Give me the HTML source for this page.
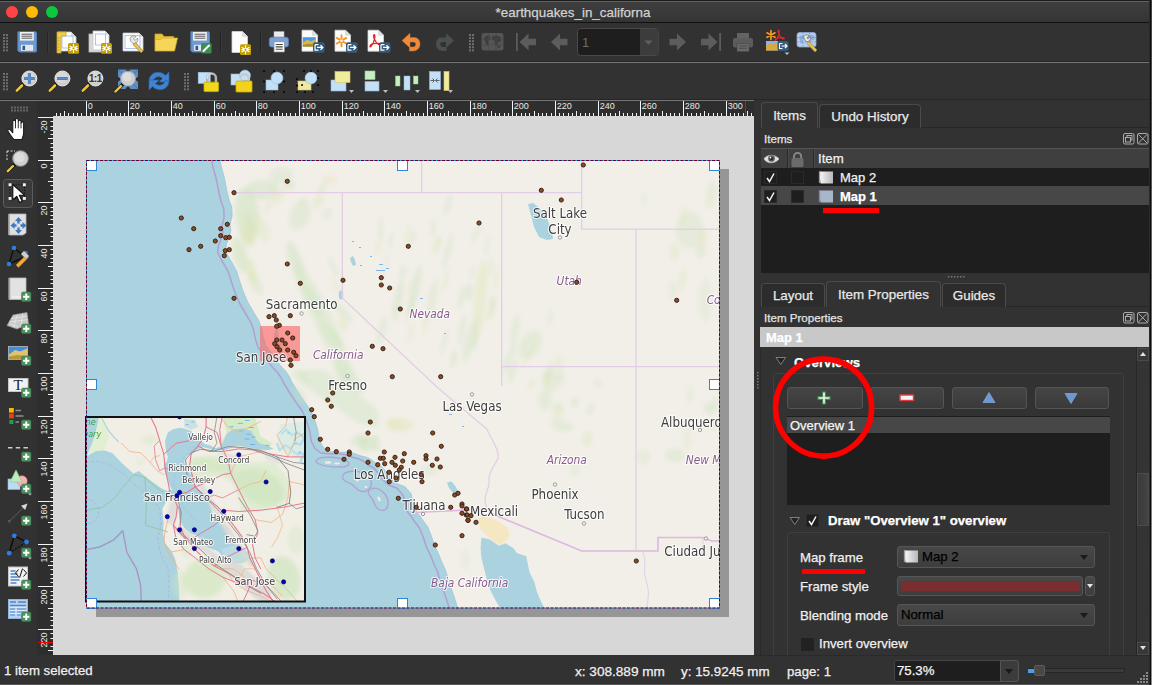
<!DOCTYPE html><html><head><meta charset="utf-8"><title>earthquakes_in_californa</title><style>
*{box-sizing:border-box}
html,body{margin:0;padding:0}
body{width:1152px;height:685px;position:relative;overflow:hidden;background:#323232;font-family:"Liberation Sans",sans-serif;font-size:13.2px;color:#e6e6e6}
.abs{position:absolute}
#title{left:0;top:0;width:1152px;height:23px;background:linear-gradient(#1c1c1c 0,#1c1c1c 1px,#626262 1px,#626262 2px,#3e3e3e 2px,#353535 22px,#111 22px);}
#title .t{left:0;width:1146px;top:5px;text-align:center;color:#d2d2d2;font-size:13.4px}
.light{width:12px;height:12px;border-radius:6px;top:6px}
body{-webkit-text-stroke-width:0.25px}
svg text{-webkit-text-stroke-width:0}
.hline{left:0;width:1150px;height:1px;background:#686868}
.grip{width:5px}
.tab{border:1px solid #4a4a4a;border-bottom:none;border-radius:4px 4px 0 0;background:#2c2c2c;color:#e8e8e8;font-size:13.4px;text-align:center}
.tab.sel{background:#323232;}
.docktitle{font-size:11.6px;color:#e4e4e4}
.btn{border:1px solid #555;border-radius:3px;background:linear-gradient(#454545,#3a3a3a)}
.combo{border:1px solid #565656;border-radius:3px;background:linear-gradient(#484848,#3d3d3d);color:#000;font-size:13.2px}
.lbl{font-size:13.2px;color:#f0f0f0;white-space:nowrap}
.bold{font-weight:bold;color:#fff}
.gbox{border:1px solid #3f3f3f;border-radius:3px}
.chk{width:13px;height:13px;background:#1e1e1e;border:1px solid #2a2a2a}
</style></head><body>
<div id="title" class="abs"><div class="abs light" style="left:6px;background:#fe4447"></div><div class="abs light" style="left:26px;background:#fdbb05"></div><div class="abs light" style="left:46px;background:#0bc840"></div><div class="abs t">*earthquakes_in_californa</div></div>
<div class="abs hline" style="top:61px;background:#242424"></div><div class="abs hline" style="top:62px;background:#767676"></div>
<div class="abs hline" style="top:99px;background:#262626"></div><div class="abs hline" style="top:100px;background:#767676"></div>
<svg class="abs" style="left:0;top:23px" width="1152" height="77" viewBox="0 23 1152 77" font-family="Liberation Sans, sans-serif"><rect x="3" y="34.00" width="2" height="2" fill="#6e6e6e"/><rect x="6" y="34.00" width="2" height="2" fill="#6e6e6e"/><rect x="3" y="37.07" width="2" height="2" fill="#6e6e6e"/><rect x="6" y="37.07" width="2" height="2" fill="#6e6e6e"/><rect x="3" y="40.14" width="2" height="2" fill="#6e6e6e"/><rect x="6" y="40.14" width="2" height="2" fill="#6e6e6e"/><rect x="3" y="43.21" width="2" height="2" fill="#6e6e6e"/><rect x="6" y="43.21" width="2" height="2" fill="#6e6e6e"/><rect x="3" y="46.28" width="2" height="2" fill="#6e6e6e"/><rect x="6" y="46.28" width="2" height="2" fill="#6e6e6e"/><rect x="3" y="49.35" width="2" height="2" fill="#6e6e6e"/><rect x="6" y="49.35" width="2" height="2" fill="#6e6e6e"/><g transform="translate(15,30)" ><path d="M2.900 1.800h17.600a1 1 0 0 1 1 1v18.200a1 1 0 0 1-1 1H4.400L2.900 20.500z" fill="#6c99d0" stroke="#547fb8" stroke-width="1"/>
<rect x="5" y="2" width="13.800" height="8.600" fill="#f1f1f1"/><path d="M6.500 4.200h10.800M6.500 6.200h10.800M6.500 8.200h10.800" stroke="#4a4a4a" stroke-width="0.900"/>
<rect x="6" y="14.800" width="12.200" height="6" fill="#e6e6e6"/><rect x="7.500" y="15.800" width="2.600" height="4.200" fill="#2f568c"/></g><path d="M47.5 31V53" stroke="#252525" stroke-width="1"/><path d="M48.5 31V53" stroke="#3a3a3a" stroke-width="1"/><g transform="translate(55,30)" ><path d="M3 2h13l5 5v14H3z" fill="#fdfdfd" stroke="#c8c8c8" stroke-width="0.8"/><path d="M16 2v5h5z" fill="#e0e0e0"/><rect x="7" y="6" width="11" height="12" fill="none" stroke="#9db4ee" stroke-width="0.8"/>
<path d="M2 2h9v4H6v17H2z" fill="#f0d04a" stroke="#c9a227" stroke-width="0.8"/><path d="M2.5 8h2M2.5 11h2M2.5 14h2M2.5 17h2M2.5 20h2" stroke="#a88418" stroke-width="0.7"/><rect x="13" y="13" width="11" height="10.700" rx="1.500" fill="#c4a000"/><g stroke="#fff" stroke-width="1.200" stroke-linecap="round"><path d="M18.500 14.300v8.100M15 16.300l7 4.100M15 20.400l7-4.100M14.700 18.350h7.600"/></g><circle cx="18.500" cy="18.350" r="1.500" fill="#c4a000" stroke="#fff" stroke-width="0.900"/></g><g transform="translate(88,30)" ><rect x="1" y="4" width="15" height="18" fill="#d9d9d9" stroke="#bdbdbd" stroke-width="0.8"/><path d="M5 1h12l4 4v15H5z" fill="#fdfdfd" stroke="#c8c8c8" stroke-width="0.8"/><path d="M17 1v4h4z" fill="#e0e0e0"/><rect x="7.5" y="4" width="10" height="11" fill="none" stroke="#9db4ee" stroke-width="0.8"/><rect x="13" y="13" width="11" height="10.700" rx="1.500" fill="#c4a000"/><g stroke="#fff" stroke-width="1.200" stroke-linecap="round"><path d="M18.500 14.300v8.100M15 16.300l7 4.100M15 20.400l7-4.100M14.700 18.350h7.600"/></g><circle cx="18.500" cy="18.350" r="1.500" fill="#c4a000" stroke="#fff" stroke-width="0.900"/></g><g transform="translate(121,30)" ><path d="M2 3h16l4 4v14H2z" fill="#fdfdfd" stroke="#c8c8c8" stroke-width="0.8"/><path d="M18 3v4h4z" fill="#e0e0e0"/><rect x="4" y="5.5" width="15" height="13" fill="none" stroke="#9db4ee" stroke-width="0.8"/>
<path d="M9 8.5a4 4 0 0 1 6-2l-2.5 2.5 1.5 1.5 2.5-2.5a4 4 0 0 1-4.5 5.5l-0.5-0.5-2-2z" fill="#e8e8e8" stroke="#8a8a8a" stroke-width="0.8"/><path d="M14.5 12.5l7.5 8.5-1.8 1.8-8-8z" fill="#e6c35c" stroke="#a78422" stroke-width="0.8"/></g><g transform="translate(154,30)" ><path d="M1 4h7l2 2.5h9.5v4H1z" fill="#e9c53c" stroke="#c9a227" stroke-width="0.8"/><path d="M1 21V9.5h6l1.5-1.5H23.5L20.5 21z" fill="#f6d658" stroke="#d4ad2d" stroke-width="0.8"/></g><g transform="translate(188,30)" ><path d="M2.900 1.800h17.600a1 1 0 0 1 1 1v18.200a1 1 0 0 1-1 1H4.400L2.900 20.500z" fill="#6c99d0" stroke="#547fb8" stroke-width="1"/>
<rect x="5" y="2" width="13.800" height="8.600" fill="#f1f1f1"/><path d="M6.500 4.200h10.800M6.500 6.200h10.800M6.500 8.200h10.800" stroke="#4a4a4a" stroke-width="0.900"/>
<rect x="6" y="14.800" width="12.200" height="6" fill="#e6e6e6"/><rect x="7.500" y="15.800" width="2.600" height="4.200" fill="#2f568c"/><rect x="13" y="13" width="10.5" height="10.5" rx="1.5" fill="#3c8d4f"/><path d="M15.5 21l5.5-5.5" stroke="#fff" stroke-width="2" stroke-linecap="round"/></g><path d="M220.5 31V53" stroke="#252525" stroke-width="1"/><path d="M221.5 31V53" stroke="#3a3a3a" stroke-width="1"/><g transform="translate(230,31)" ><path d="M2 0.500h10.500l5 5v16H2z" fill="#fdfdfd" stroke="#d4d4d4" stroke-width="0.800"/><path d="M12.500 0.500v5h5z" fill="#e0e0e0" stroke="#cfcfcf" stroke-width="0.600"/><g transform="translate(-3,0.300)"><rect x="13" y="13" width="11" height="10.700" rx="1.500" fill="#c4a000"/><g stroke="#fff" stroke-width="1.200" stroke-linecap="round"><path d="M18.500 14.300v8.100M15 16.300l7 4.100M15 20.400l7-4.100M14.700 18.350h7.600"/></g><circle cx="18.500" cy="18.350" r="1.500" fill="#c4a000" stroke="#fff" stroke-width="0.900"/></g></g><path d="M260.5 31V53" stroke="#252525" stroke-width="1"/><path d="M261.5 31V53" stroke="#3a3a3a" stroke-width="1"/><g transform="translate(267,30)" ><rect x="7" y="1.700" width="10" height="6.500" fill="#ececec" stroke="#bdbdbd" stroke-width="0.600"/><rect x="2.300" y="7.200" width="19.200" height="9.800" rx="2.500" fill="#7ea2d3" stroke="#5b83ba" stroke-width="0.800"/><rect x="7" y="11.800" width="10.500" height="10.200" fill="#fbfbfb" stroke="#8a8a8a" stroke-width="0.700"/><path d="M8.700 14.500h7M8.700 16.900h7M8.700 19.300h7" stroke="#444" stroke-width="1.100"/></g><g transform="translate(300,29.7)" ><path d="M2 0.500h10.500l5 5v16H2z" fill="#fdfdfd" stroke="#d4d4d4" stroke-width="0.800"/><path d="M12.500 0.500v5h5z" fill="#e0e0e0" stroke="#cfcfcf" stroke-width="0.600"/><rect x="2.800" y="7.500" width="13" height="9.300" fill="#4a9be8"/><path d="M2.800 13l4.500-3 3.500 1.500 5-2v7.300H2.800z" fill="#d8b44a"/><path d="M2.800 15.200l5-1 8 0.800v1.800H2.800z" fill="#a88a2a"/><rect x="13" y="12.500" width="11.5" height="10.5" rx="2" fill="#37597a"/><path d="M15 15v5.500h3.500M15 15h3.500" fill="none" stroke="#fff" stroke-width="1.2"/><path d="M17 17.750h5.500M20.500 15.500l2.300 2.250-2.300 2.250" fill="none" stroke="#fff" stroke-width="1.3"/></g><g transform="translate(333,29.7)" ><path d="M2 0.500h10.500l5 5v16H2z" fill="#fdfdfd" stroke="#d4d4d4" stroke-width="0.800"/><path d="M12.500 0.500v5h5z" fill="#e0e0e0" stroke="#cfcfcf" stroke-width="0.600"/><g stroke="#f7941d" stroke-width="1.900" stroke-linecap="round"><path d="M8.500 5.500v11M3.800 8.200l9.400 5.600M3.800 13.800l9.400-5.600"/></g><circle cx="8.500" cy="11" r="1.300" fill="#fdfdfd"/><rect x="13" y="12.500" width="11.5" height="10.5" rx="2" fill="#37597a"/><path d="M15 15v5.500h3.500M15 15h3.500" fill="none" stroke="#fff" stroke-width="1.2"/><path d="M17 17.750h5.500M20.500 15.500l2.300 2.250-2.300 2.250" fill="none" stroke="#fff" stroke-width="1.3"/></g><g transform="translate(366,29.7)" ><path d="M2 0.500h10.500l5 5v16H2z" fill="#fdfdfd" stroke="#d4d4d4" stroke-width="0.800"/><path d="M12.500 0.500v5h5z" fill="#e0e0e0" stroke="#cfcfcf" stroke-width="0.600"/><path d="M8 5c1.500 0 1 4-0.500 7.500S3.500 18.500 4 16.500 8.500 13.500 12.500 13.800 14.500 16 12 14.500 6.500 6 8 5z" fill="none" stroke="#e3262b" stroke-width="1.300"/><rect x="13" y="12.500" width="11.5" height="10.5" rx="2" fill="#37597a"/><path d="M15 15v5.500h3.500M15 15h3.500" fill="none" stroke="#fff" stroke-width="1.2"/><path d="M17 17.750h5.500M20.500 15.500l2.300 2.250-2.300 2.250" fill="none" stroke="#fff" stroke-width="1.3"/></g><g transform="translate(400,30)" ><path d="M2 10.600L10 3.300V7.500H14C18 7.500 20 10.500 20 14C20 18 17 21 13 21H9.400V17H13C14.800 17 15.800 15.800 15.800 14.200C15.800 12.700 14.800 12 13.500 12H10V17.900Z" fill="#ee8a3c" stroke="#d9742a" stroke-width="0.500"/></g><g transform="translate(432,30)" ><path d="M22 10.600L14 3.300V7.500H10C6 7.500 4 10.500 4 14C4 18 7 21 11 21H14.600V17H11C9.200 17 8.200 15.800 8.200 14.200C8.200 12.700 9.200 12 10.500 12H14V17.900Z" fill="#4a504f"/></g><rect x="469" y="34.00" width="2" height="2" fill="#6e6e6e"/><rect x="472" y="34.00" width="2" height="2" fill="#6e6e6e"/><rect x="469" y="37.07" width="2" height="2" fill="#6e6e6e"/><rect x="472" y="37.07" width="2" height="2" fill="#6e6e6e"/><rect x="469" y="40.14" width="2" height="2" fill="#6e6e6e"/><rect x="472" y="40.14" width="2" height="2" fill="#6e6e6e"/><rect x="469" y="43.21" width="2" height="2" fill="#6e6e6e"/><rect x="472" y="43.21" width="2" height="2" fill="#6e6e6e"/><rect x="469" y="46.28" width="2" height="2" fill="#6e6e6e"/><rect x="472" y="46.28" width="2" height="2" fill="#6e6e6e"/><rect x="469" y="49.35" width="2" height="2" fill="#6e6e6e"/><rect x="472" y="49.35" width="2" height="2" fill="#6e6e6e"/><g transform="translate(480,30)" ><rect x="1.500" y="3" width="22" height="17.500" rx="2.500" fill="#555"/><g fill="#3e3e3e"><path d="M4 8l3-2.500 3 0.500 0.500 3-2 2 0.500 3.500-2 1-1.500-3z"/><path d="M12 6.500l4-1 4.500 1.500 0.500 4-3 1.500-1 3-2.500-1 0.500-3.500-3-1.500z"/><path d="M17 15.500l2.500-0.500 1 2.500-2.500 0.500z"/></g><path d="M1.500 9H23.500M1.500 15H23.500M8.500 3v17.500M16 3v17.500" stroke="#484848" stroke-width="0.6"/></g><g transform="translate(516,30)" ><rect x="0" y="3" width="1.800" height="18" fill="#5c5c5c"/><path d="M3.500 12l9-8.500v5.300H20v6.400h-7.500v5.300z" fill="#5c5c5c"/></g><g transform="translate(549,30)" ><path d="M2 12l9-8.500v5.300h7.500v6.400H11v5.300z" fill="#5c5c5c"/></g><rect x="577.500" y="28.500" width="81" height="27" rx="3" fill="#1e1e1e" stroke="#4a4a4a"/><path d="M640 29h15.500a3 3 0 0 1 3 3v20a3 3 0 0 1-3 3H640z" fill="#3c3c3c"/><path d="M644.500 40.500h8l-4 4.500z" fill="#5e5e5e"/><text x="582" y="47" font-size="13" fill="#6b6b6b">1</text><g transform="translate(666,30)" ><g transform="translate(22,0) scale(-1,1)"><path d="M2 12l9-8.500v5.300h7.500v6.400H11v5.300z" fill="#5c5c5c"/></g></g><g transform="translate(699,30)" ><g transform="translate(22,0) scale(-1,1)"><rect x="0" y="3" width="1.800" height="18" fill="#5c5c5c"/><path d="M3.500 12l9-8.500v5.300H20v6.400h-7.500v5.300z" fill="#5c5c5c"/></g></g><g transform="translate(731,30)" ><rect x="6" y="3" width="12" height="6" fill="#636363"/><rect x="2" y="8" width="20" height="9.500" rx="2" fill="#5c5c5c"/><rect x="6" y="13.500" width="12" height="8" fill="#6a6a6a" stroke="#484848" stroke-width="0.6"/><path d="M8 16h8M8 18.300h8" stroke="#484848" stroke-width="0.9"/></g><g transform="translate(764,29)" ><g stroke="#f39a1f" stroke-width="1.700" stroke-linecap="round"><path d="M7 1.500v9M3 3.800l8 4.500M3 8.300l8-4.500"/></g><path d="M14.500 1c1.200 0 0.800 3.500-0.400 6.500S10.500 12.700 11 11s3.900-2.500 7.300-2.300 1.800 2-0.400 0.700-4.800-7.400-3.400-8.400z" fill="none" stroke="#e3262b" stroke-width="1.200"/>
<rect x="2" y="12" width="12" height="9.500" fill="#8bb3e4"/><path d="M2 17l4-2.500 3.500 1 4.500-2v8H2z" fill="#d9a93a"/>
<rect x="13.500" y="12" width="11" height="10" rx="2" fill="#37597a"/><path d="M15.500 14.500v5h3M15.500 14.500h3" fill="none" stroke="#fff" stroke-width="1.100"/><path d="M17.500 17h5M21 15l2 2-2 2" fill="none" stroke="#fff" stroke-width="1.200"/><path d="M20.500 23.500h5l-2.500 2.500z" fill="#bbb"/></g><g transform="translate(796,31)" ><rect x="1" y="1.500" width="19" height="14.500" rx="2.500" fill="#b9cdea" stroke="#8aa7d4" stroke-width="0.8"/><g fill="#8fb0dc"><path d="M3 6l3-2 2.500 0.500v3l-2 1.500 0.500 3-2 0.500z"/><path d="M11 4.500l4-1 3.500 1.500v3.500l-3 1-1 2.500-2-1 0.500-3z"/></g><path d="M1 6.500h19M1 11h19M7 1.500V16M13.500 1.500V16" stroke="#5f86c2" stroke-width="0.6" stroke-dasharray="1.500 1"/>
<path d="M7.500 6a3.600 3.600 0 0 1 5.500-1.500L10.700 6.800l1.300 1.300 2.300-2.300a3.600 3.600 0 0 1-4.300 4.700z" fill="#efefef" stroke="#777" stroke-width="0.8"/><path d="M13 10.500l8 8.500-2 2-8-8.500z" fill="#e6c35c" stroke="#a78422" stroke-width="0.8"/></g><rect x="3" y="73.00" width="2" height="2" fill="#6e6e6e"/><rect x="6" y="73.00" width="2" height="2" fill="#6e6e6e"/><rect x="3" y="76.07" width="2" height="2" fill="#6e6e6e"/><rect x="6" y="76.07" width="2" height="2" fill="#6e6e6e"/><rect x="3" y="79.14" width="2" height="2" fill="#6e6e6e"/><rect x="6" y="79.14" width="2" height="2" fill="#6e6e6e"/><rect x="3" y="82.21" width="2" height="2" fill="#6e6e6e"/><rect x="6" y="82.21" width="2" height="2" fill="#6e6e6e"/><rect x="3" y="85.28" width="2" height="2" fill="#6e6e6e"/><rect x="6" y="85.28" width="2" height="2" fill="#6e6e6e"/><rect x="3" y="88.35" width="2" height="2" fill="#6e6e6e"/><rect x="6" y="88.35" width="2" height="2" fill="#6e6e6e"/><g transform="translate(15,69)" ><path d="M2 21.500l8-8" stroke="#111" stroke-width="3.400" stroke-linecap="round"/><path d="M1.800 21.700l5.200-5.200" stroke="#f1c832" stroke-width="2.600" stroke-linecap="round"/><circle cx="14.400" cy="9.500" r="7.500" fill="#cdcdcd" stroke="#f0f0f0" stroke-width="0.900"/><circle cx="13.800" cy="8.500" r="5.600" fill="#e4e4e4" opacity="0.550"/><path d="M14.400 4.300v10.400M9.200 9.500h10.400" stroke="#3f6fa8" stroke-width="3"/><path d="M14.400 4.600v9.800M9.500 9.500h9.800" stroke="#5b8fcf" stroke-width="2"/></g><g transform="translate(48,69)" ><path d="M2 21.500l8-8" stroke="#111" stroke-width="3.400" stroke-linecap="round"/><path d="M1.800 21.700l5.200-5.200" stroke="#f1c832" stroke-width="2.600" stroke-linecap="round"/><circle cx="14.400" cy="9.500" r="7.500" fill="#cdcdcd" stroke="#f0f0f0" stroke-width="0.900"/><circle cx="13.800" cy="8.500" r="5.600" fill="#e4e4e4" opacity="0.550"/><path d="M9.200 9.500h10.400" stroke="#3f6fa8" stroke-width="3"/><path d="M9.500 9.500h9.800" stroke="#5b8fcf" stroke-width="2"/></g><g transform="translate(81,69)" ><path d="M2 21.500l8-8" stroke="#111" stroke-width="3.400" stroke-linecap="round"/><path d="M1.800 21.700l5.200-5.200" stroke="#f1c832" stroke-width="2.600" stroke-linecap="round"/><circle cx="14.400" cy="9.500" r="7.500" fill="#cdcdcd" stroke="#f0f0f0" stroke-width="0.900"/><circle cx="13.800" cy="8.500" r="5.600" fill="#e4e4e4" opacity="0.550"/><text x="14.200" y="13.300" font-size="10.500" font-weight="bold" text-anchor="middle" fill="#383838" letter-spacing="-0.700">1:1</text></g><g transform="translate(114,69)" ><rect x="4" y="0.500" width="20" height="19.500" fill="#5b8fcb"/><g fill="#2f2f2f"><path d="M11.500 0.500h5l-2.500 3.500z"/><path d="M11.500 20h5l-2.500-3.500z"/><path d="M4 7.800v5l3.500-2.500z"/><path d="M24 7.800v5l-3.500-2.500z"/></g><g stroke="#3f72ad" stroke-width="0.800"><path d="M4.500 1l6 6M23.500 1l-6 6M23.500 19.500l-6-6"/></g>
<path d="M2 22l7.500-7.500" stroke="#1a1a1a" stroke-width="3.400" stroke-linecap="round"/><path d="M1.500 22.500l5.400-5.400" stroke="#f1c832" stroke-width="2.400" stroke-linecap="round"/><circle cx="14" cy="9.600" r="7.400" fill="#cdcdcd" stroke="#a9a9a9" stroke-width="0.800"/><circle cx="13" cy="8" r="4.500" fill="#e9e9e9" opacity="0.550"/></g><g transform="translate(147,69)" ><path d="M2 11C3 5.500 7.500 2.500 13 3.500c2.500 0.500 4 1.500 5.500 3L22 3v10h-10l3.500-3.500c-2-2-5.500-2.500-8 0C6.500 10.500 6 11.500 5.500 13z" fill="#3f84d1" stroke="#2b63a6" stroke-width="0.7"/><path d="M22 13c-1 5.500-5.500 8.500-11 7.500-2.500-0.500-4-1.500-5.500-3L2 21V11h10l-3.500 3.500c2 2 5.500 2.500 8 0 1-1 1.500-2 2-3.500z" fill="#3f84d1" stroke="#2b63a6" stroke-width="0.7"/></g><rect x="184" y="73.00" width="2" height="2" fill="#6e6e6e"/><rect x="187" y="73.00" width="2" height="2" fill="#6e6e6e"/><rect x="184" y="76.07" width="2" height="2" fill="#6e6e6e"/><rect x="187" y="76.07" width="2" height="2" fill="#6e6e6e"/><rect x="184" y="79.14" width="2" height="2" fill="#6e6e6e"/><rect x="187" y="79.14" width="2" height="2" fill="#6e6e6e"/><rect x="184" y="82.21" width="2" height="2" fill="#6e6e6e"/><rect x="187" y="82.21" width="2" height="2" fill="#6e6e6e"/><rect x="184" y="85.28" width="2" height="2" fill="#6e6e6e"/><rect x="187" y="85.28" width="2" height="2" fill="#6e6e6e"/><rect x="184" y="88.35" width="2" height="2" fill="#6e6e6e"/><rect x="187" y="88.35" width="2" height="2" fill="#6e6e6e"/><g transform="translate(197,69)" ><rect x="1.200" y="3.300" width="12" height="11" fill="#c3e0f7" stroke="#9cc6ea" stroke-width="0.600"/><path d="M10.300 14V8.800a4.300 4.300 0 0 1 8.600 0V14" fill="none" stroke="#b4b4b4" stroke-width="2.500"/><path d="M10.300 10V8.800a4.300 4.300 0 0 1 4.300-4.300" fill="none" stroke="#e0e0e0" stroke-width="1.200"/><rect x="7" y="13.200" width="14.500" height="9.400" rx="0.800" fill="#f0d91c" stroke="#c9ae0c" stroke-width="0.800"/></g><g transform="translate(230,69)" ><rect x="1" y="5" width="12" height="11" fill="#c3e0f6" stroke="#8fb8dc" stroke-width="0.6"/><circle cx="15" cy="6.500" r="5.500" fill="#c3e0f6" stroke="#8fb8dc" stroke-width="0.6"/><path d="M10 9.500a4.500 4.500 0 1 1 8 3" fill="none" stroke="#c9c9c9" stroke-width="2.400"/><rect x="6" y="12" width="16" height="11" rx="1" fill="#f3d21b" stroke="#c9a90c" stroke-width="0.8"/></g><g transform="translate(263,70)" ><rect x="3" y="10" width="12" height="10" fill="#c3e0f6" stroke="#8fb8dc" stroke-width="0.6"/><circle cx="14" cy="8" r="6" fill="#c3e0f6" stroke="#8fb8dc" stroke-width="0.6"/><rect x="0.19999999999999996" y="0.19999999999999996" width="1.700" height="1.700" fill="#000"/><rect x="10.2" y="0.19999999999999996" width="1.700" height="1.700" fill="#000"/><rect x="20.2" y="0.19999999999999996" width="1.700" height="1.700" fill="#000"/><rect x="0.19999999999999996" y="10.7" width="1.700" height="1.700" fill="#000"/><rect x="20.2" y="10.7" width="1.700" height="1.700" fill="#000"/><rect x="0.19999999999999996" y="21.2" width="1.700" height="1.700" fill="#000"/><rect x="10.2" y="21.2" width="1.700" height="1.700" fill="#000"/><rect x="20.2" y="21.2" width="1.700" height="1.700" fill="#000"/></g><g transform="translate(296,70)" ><rect x="2" y="11" width="13" height="9" fill="#eee9a0" stroke="#cfc873" stroke-width="0.6"/><circle cx="15" cy="8" r="6" fill="#c3e0f6" stroke="#8fb8dc" stroke-width="0.6"/><rect x="7.2" y="0.19999999999999996" width="1.700" height="1.700" fill="#000"/><rect x="14.2" y="0.19999999999999996" width="1.700" height="1.700" fill="#000"/><rect x="21.2" y="0.19999999999999996" width="1.700" height="1.700" fill="#000"/><rect x="21.2" y="7.2" width="1.700" height="1.700" fill="#000"/><rect x="21.2" y="14.2" width="1.700" height="1.700" fill="#000"/><rect x="0.19999999999999996" y="8.2" width="1.700" height="1.700" fill="#000"/><rect x="0.19999999999999996" y="14.7" width="1.700" height="1.700" fill="#000"/><rect x="0.19999999999999996" y="21.2" width="1.700" height="1.700" fill="#000"/><rect x="8.2" y="21.2" width="1.700" height="1.700" fill="#000"/><rect x="16.2" y="21.2" width="1.700" height="1.700" fill="#000"/><rect x="5.2" y="14.2" width="1.700" height="1.700" fill="#000"/></g><g transform="translate(330,70)" ><rect x="1" y="10" width="15" height="11" fill="#c3e0f6" stroke="#8fb8dc" stroke-width="0.6"/><rect x="5" y="1.500" width="15" height="11" fill="#f1ec9b" stroke="#cfc873" stroke-width="0.6"/><path d="M19 20h5l-2.500 3z" fill="#bdbdbd"/></g><g transform="translate(364,70)" ><rect x="1" y="1" width="10" height="8.500" fill="#c6efc1" stroke="#8ccc86" stroke-width="0.6"/><rect x="1" y="11.500" width="14" height="9.500" fill="#c3e0f6" stroke="#8fb8dc" stroke-width="0.6"/><path d="M19 20h5l-2.500 3z" fill="#bdbdbd"/></g><g transform="translate(395,70)" ><path d="M2 1v7M11.500 1v7M20.500 1v7" stroke="#222" stroke-width="0.8"/><rect x="0.500" y="6" width="4.500" height="10" fill="#c6efc1" stroke="#8ccc86" stroke-width="0.5"/><rect x="9" y="6" width="6" height="14" fill="#c3e0f6" stroke="#8fb8dc" stroke-width="0.5"/><rect x="18.500" y="6" width="4.500" height="8" fill="#c6efc1" stroke="#8ccc86" stroke-width="0.5"/><path d="M20 20h5l-2.500 3z" fill="#bdbdbd"/></g><g transform="translate(429,70)" ><rect x="0.500" y="1.500" width="11" height="18" fill="#c3e0f6" stroke="#8fb8dc" stroke-width="0.6"/><rect x="15" y="1.500" width="5" height="19" fill="#f1ec9b" stroke="#cfc873" stroke-width="0.6"/><path d="M1.500 10.500h3.500M3.500 8.500l2 2-2 2M10.500 10.500H7M8.500 8.500l-2 2 2 2" fill="none" stroke="#444" stroke-width="0.8"/><path d="M19 20h5l-2.500 3z" fill="#bdbdbd"/></g></svg>
<svg class="abs" style="left:0;top:100px" width="37" height="555" viewBox="0 100 37 555" font-family="Liberation Sans, sans-serif"><rect x="11.0" y="106.500" width="2" height="2" fill="#666"/><rect x="11.0" y="109.500" width="2" height="2" fill="#666"/><rect x="14.0" y="106.500" width="2" height="2" fill="#666"/><rect x="14.0" y="109.500" width="2" height="2" fill="#666"/><rect x="17.0" y="106.500" width="2" height="2" fill="#666"/><rect x="17.0" y="109.500" width="2" height="2" fill="#666"/><rect x="20.0" y="106.500" width="2" height="2" fill="#666"/><rect x="20.0" y="109.500" width="2" height="2" fill="#666"/><rect x="23.0" y="106.500" width="2" height="2" fill="#666"/><rect x="23.0" y="109.500" width="2" height="2" fill="#666"/><rect x="26.0" y="106.500" width="2" height="2" fill="#666"/><rect x="26.0" y="109.500" width="2" height="2" fill="#666"/><rect x="3.500" y="179.500" width="29" height="28" rx="3" fill="#3a3a3a" stroke="#5c5c5c"/><g transform="translate(6,117)" ><g transform="translate(-1.500,-1) scale(1.180,1.120)"><path d="M8 21c-1.500-2-4-5.500-5-7.500-0.700-1.400 1-2.300 2-1l2 2.500V5c0-1.700 2.300-1.700 2.300 0V3.500c0-1.700 2.400-1.700 2.400 0V5c0-1.600 2.300-1.600 2.300 0v1.500c0-1.500 2.200-1.500 2.200 0V15c0 3-1 4.500-1.500 6z" fill="#fff" stroke="#1a1a1a" stroke-width="0.900" stroke-linejoin="round"/><path d="M9.300 5v6M11.700 5v6M14 6.500V11" stroke="#1a1a1a" stroke-width="0.800"/></g></g><g transform="translate(6,149)" ><path d="M1 2h8M1 2v10" fill="none" stroke="#ddd" stroke-width="1" stroke-dasharray="2 1.500"/><path d="M2 22l7.500-7.500" stroke="#111" stroke-width="3.400" stroke-linecap="round"/><path d="M1.800 22.200l5.200-5.200" stroke="#f1c832" stroke-width="2.400" stroke-linecap="round"/><circle cx="14.500" cy="9.500" r="7.800" fill="#cfcfcf" stroke="#8f8f8f" stroke-width="1"/><circle cx="13.500" cy="8.500" r="5" fill="#e6e6e6" opacity="0.6"/></g><g transform="translate(6,181)" ><rect x="4" y="3.700" width="14.500" height="13.700" fill="none" stroke="#0a0a0a" stroke-width="0.900" stroke-dasharray="1.200 1.600"/><g fill="#f2f2f2"><rect x="2.600" y="2.300" width="2.900" height="2.900"/><rect x="16.900" y="2.300" width="2.900" height="2.900"/><rect x="2.600" y="16" width="2.900" height="2.900"/><rect x="16.900" y="16" width="2.900" height="2.900"/></g><path d="M6.800 3.500v15.500l3.900-3.700 2.900 6.200 2.600-1.200-2.900-6h5.500z" fill="#fff" stroke="#111" stroke-width="1.100" stroke-linejoin="round"/></g><g transform="translate(6,213)" ><path d="M3 1h17v19l-3 2H3z" fill="#e0e0e0" stroke="#b5b5b5" stroke-width="0.8"/><path d="M3 1v21" stroke="#a9a9a9" stroke-width="1.500"/><g fill="#3f78c2"><path d="M12.500 4l3.500 4h-2.300v2.500h-2.400V8H9z"/><path d="M12.500 21l3.500-4h-2.300v-2.500h-2.400V17H9z" /><path d="M4.500 12.500l4-3.500v2.300h2v2.400h-2V16z"/><path d="M20.500 12.500l-4-3.500v2.300h-2v2.400h2V16z"/></g></g><g transform="translate(6,245)" ><path d="M3 19L8 3l11 9z" fill="none" stroke="#111" stroke-width="1.500"/><circle cx="3" cy="19" r="2.300" fill="#2f7de1"/><circle cx="8" cy="3" r="2.300" fill="#2f7de1"/><circle cx="19.500" cy="8" r="2.300" fill="#2f7de1"/><path d="M10 20l10-10 2.500 2.500-10 10z" fill="#f1a93a" stroke="#b97914" stroke-width="0.6"/><path d="M15 9l3-3 5 5-3 3z" fill="#cfcfcf" stroke="#8a8a8a" stroke-width="0.6"/></g><g transform="translate(6,277)" ><path d="M3 1h17v19l-3 2.500H3z" fill="#e2e2e2" stroke="#bdbdbd" stroke-width="0.8"/><path d="M3.500 1v21" stroke="#aaa" stroke-width="1.600"/><path d="M6 20h11l3-2.500" fill="none" stroke="#f6f6f6" stroke-width="1"/><rect x="15.500" y="15" width="9.500" height="9.500" rx="1.500" fill="#4d9160" stroke="#3b7a4c" stroke-width="0.5"/><path d="M20.250 16.600v6.300M17.100 19.750h6.300" stroke="#fff" stroke-width="1.900"/></g><g transform="translate(6,309)" ><path d="M1 16.500L7 6l14-2.500 1.500 11.500L11 20z" fill="#c9c9c9" stroke="#9a9a9a" stroke-width="0.700"/><path d="M5 9.500l16.500-2.500M3 13l19-2.500M11.500 5.200l-4 13M16.500 4.300l-1.500 14M4 15l8 3" stroke="#e8e8e8" stroke-width="0.700" fill="none"/><rect x="15.500" y="15" width="9.500" height="9.500" rx="1.500" fill="#4d9160" stroke="#3b7a4c" stroke-width="0.5"/><path d="M20.250 16.600v6.300M17.100 19.750h6.300" stroke="#fff" stroke-width="1.900"/></g><g transform="translate(6,341)" ><rect x="2.500" y="5.500" width="19" height="13" fill="#3f8ee0" stroke="#b9b9b9" stroke-width="0.800"/><path d="M3 13.500l6-4.500 5 1.500 7.500-3v10.500H3z" fill="#e2c36a"/><path d="M3 15.500l8-1.500 10.500 1v3H3z" fill="#b59a3a"/><rect x="15.500" y="15" width="9.500" height="9.500" rx="1.500" fill="#4d9160" stroke="#3b7a4c" stroke-width="0.5"/><path d="M20.250 16.600v6.300M17.100 19.750h6.300" stroke="#fff" stroke-width="1.900"/></g><g transform="translate(6,373)" ><rect x="2.500" y="5.500" width="19.500" height="13" fill="#f2f2f2" stroke="#c4c4c4" stroke-width="1"/><text x="12" y="17" font-size="15" text-anchor="middle" font-family="Liberation Serif, serif" fill="#222">T</text><rect x="15.500" y="15" width="9.500" height="9.500" rx="1.500" fill="#4d9160" stroke="#3b7a4c" stroke-width="0.5"/><path d="M20.250 16.600v6.300M17.100 19.750h6.300" stroke="#fff" stroke-width="1.900"/></g><g transform="translate(6,405)" ><rect x="3" y="3" width="4.800" height="4.600" fill="#f6b800"/><rect x="3" y="8.600" width="4.800" height="4.800" fill="#e8401c"/><rect x="3.400" y="15" width="4" height="4" fill="#1fa050"/><path d="M9.500 5.500h5.500M9.500 11h8M9.500 17h3.500" stroke="#8f8f8f" stroke-width="1.600"/><rect x="15.500" y="15" width="9.500" height="9.500" rx="1.500" fill="#4d9160" stroke="#3b7a4c" stroke-width="0.5"/><path d="M20.250 16.600v6.300M17.100 19.750h6.300" stroke="#fff" stroke-width="1.900"/></g><g transform="translate(6,437)" ><path d="M2 10.700h20" stroke="#2a2a2a" stroke-width="2.400"/><path d="M2 10.700h20" stroke="#cfcfcf" stroke-width="1.600" stroke-dasharray="4.500 3.200"/><rect x="15.500" y="15" width="9.500" height="9.500" rx="1.500" fill="#4d9160" stroke="#3b7a4c" stroke-width="0.5"/><path d="M20.250 16.600v6.300M17.100 19.750h6.300" stroke="#fff" stroke-width="1.900"/></g><g transform="translate(6,469)" ><rect x="2" y="10" width="12" height="10.500" fill="#bcdcf5" stroke="#8db9e0" stroke-width="0.600"/><circle cx="16" cy="12" r="5.200" fill="#f3b4b4" stroke="#dc8f8f" stroke-width="0.600"/><path d="M10 1l6 12H4z" fill="#bfeabb" stroke="#8ccc86" stroke-width="0.600"/><rect x="15.500" y="15" width="9.500" height="9.500" rx="1.500" fill="#4d9160" stroke="#3b7a4c" stroke-width="0.5"/><path d="M20.250 16.600v6.300M17.100 19.750h6.300" stroke="#fff" stroke-width="1.900"/><path d="M22 24.500h4l-2 2z" fill="#bbb"/></g><g transform="translate(6,501)" ><path d="M3.200 20.500L19 5" stroke="#4d4d4d" stroke-width="1.200"/><rect x="2" y="19" width="2.500" height="2.500" fill="#555"/><path d="M21.500 2.500l-2.300 6.500-4.200-4.200z" fill="#d6d6d6"/><rect x="15.500" y="15" width="9.500" height="9.500" rx="1.500" fill="#4d9160" stroke="#3b7a4c" stroke-width="0.5"/><path d="M20.250 16.600v6.300M17.100 19.750h6.300" stroke="#fff" stroke-width="1.900"/></g><g transform="translate(6,533)" ><path d="M3.200 20.200L8.300 2.800l12.200 6.200" fill="none" stroke="#0c0c0c" stroke-width="1.400"/><path d="M3.200 20.200L20.500 9" fill="none" stroke="#0c0c0c" stroke-width="1.200" stroke-dasharray="2 1.500"/><circle cx="3.200" cy="20.200" r="2.400" fill="#2f7de1"/><circle cx="8.300" cy="2.800" r="2.400" fill="#2f7de1"/><circle cx="20.500" cy="9" r="2.400" fill="#2f7de1"/><rect x="15.500" y="15" width="9.500" height="9.500" rx="1.500" fill="#4d9160" stroke="#3b7a4c" stroke-width="0.5"/><path d="M20.250 16.600v6.300M17.100 19.750h6.300" stroke="#fff" stroke-width="1.900"/><path d="M22 24.500h4l-2 2z" fill="#bbb"/></g><g transform="translate(6,565)" ><rect x="2.500" y="2" width="19" height="19" fill="#f1f1f1" stroke="#c4c4c4" stroke-width="1"/><path d="M4.500 6h5M4.500 9h7M4.500 12h9M4.500 15h9M4.500 18h6" stroke="#4f86cc" stroke-width="1.300"/><path d="M12.500 4.500l-3 3.500 3 3.500M17.500 4.500l3 3.500-3 3.500M16.500 3.500l-2.800 9" fill="none" stroke="#111" stroke-width="1"/><rect x="15.500" y="15" width="9.500" height="9.500" rx="1.500" fill="#4d9160" stroke="#3b7a4c" stroke-width="0.5"/><path d="M20.250 16.600v6.300M17.100 19.750h6.300" stroke="#fff" stroke-width="1.900"/></g><g transform="translate(6,597)" ><rect x="2.500" y="2.500" width="19" height="19" fill="#b9d3ee" stroke="#8fb4de" stroke-width="1"/><path d="M4 5h6M12 5h8M4 8.500h16" stroke="#4f86cc" stroke-width="1.600"/><path d="M4 12h5M11 12h9M4 15h5M11 15h9M4 18h5M11 18h4" stroke="#4f86cc" stroke-width="1.200"/><path d="M4 10.300h16M4 13.500h16M4 16.500h16" stroke="#e9f1fa" stroke-width="0.800"/><rect x="15.500" y="15" width="9.500" height="9.500" rx="1.500" fill="#4d9160" stroke="#3b7a4c" stroke-width="0.5"/><path d="M20.250 16.600v6.300M17.100 19.750h6.300" stroke="#fff" stroke-width="1.900"/></g></svg>
<svg class="abs" style="left:37px;top:100px" width="717" height="555" viewBox="37 100 717 555" font-family="Liberation Sans, sans-serif">
<rect x="37" y="101" width="16" height="15" fill="#2e2e2e"/><rect x="37" y="101" width="1" height="554" fill="#272727"/>
<rect x="53" y="116" width="701" height="539" fill="#d7d7d7"/>
<rect x="37" y="101" width="717" height="15" fill="#2e2e2e"/>
<path d="M56.5 113V116" stroke="#f4f4f4" stroke-width="1"/>
<path d="M60.5 113V116" stroke="#f4f4f4" stroke-width="1"/>
<path d="M64.5 111V116" stroke="#f4f4f4" stroke-width="1"/>
<path d="M68.5 113V116" stroke="#f4f4f4" stroke-width="1"/>
<path d="M73.5 113V116" stroke="#f4f4f4" stroke-width="1"/>
<path d="M77.5 113V116" stroke="#f4f4f4" stroke-width="1"/>
<path d="M81.5 113V116" stroke="#f4f4f4" stroke-width="1"/>
<path d="M86.5 101V116" stroke="#f4f4f4" stroke-width="1"/>
<text x="87.7" y="109.4" font-size="9" fill="#e8e8e8">0</text>
<path d="M90.5 113V116" stroke="#f4f4f4" stroke-width="1"/>
<path d="M94.5 113V116" stroke="#f4f4f4" stroke-width="1"/>
<path d="M98.5 113V116" stroke="#f4f4f4" stroke-width="1"/>
<path d="M103.5 113V116" stroke="#f4f4f4" stroke-width="1"/>
<path d="M107.5 111V116" stroke="#f4f4f4" stroke-width="1"/>
<path d="M111.5 113V116" stroke="#f4f4f4" stroke-width="1"/>
<path d="M115.5 113V116" stroke="#f4f4f4" stroke-width="1"/>
<path d="M120.5 113V116" stroke="#f4f4f4" stroke-width="1"/>
<path d="M124.5 113V116" stroke="#f4f4f4" stroke-width="1"/>
<path d="M128.5 101V116" stroke="#f4f4f4" stroke-width="1"/>
<text x="129.7" y="109.4" font-size="9" fill="#e8e8e8">20</text>
<path d="M132.5 113V116" stroke="#f4f4f4" stroke-width="1"/>
<path d="M137.5 113V116" stroke="#f4f4f4" stroke-width="1"/>
<path d="M141.5 113V116" stroke="#f4f4f4" stroke-width="1"/>
<path d="M145.5 113V116" stroke="#f4f4f4" stroke-width="1"/>
<path d="M150.5 111V116" stroke="#f4f4f4" stroke-width="1"/>
<path d="M154.5 113V116" stroke="#f4f4f4" stroke-width="1"/>
<path d="M158.5 113V116" stroke="#f4f4f4" stroke-width="1"/>
<path d="M162.5 113V116" stroke="#f4f4f4" stroke-width="1"/>
<path d="M167.5 113V116" stroke="#f4f4f4" stroke-width="1"/>
<path d="M171.5 101V116" stroke="#f4f4f4" stroke-width="1"/>
<text x="172.7" y="109.4" font-size="9" fill="#e8e8e8">40</text>
<path d="M175.5 113V116" stroke="#f4f4f4" stroke-width="1"/>
<path d="M179.5 113V116" stroke="#f4f4f4" stroke-width="1"/>
<path d="M184.5 113V116" stroke="#f4f4f4" stroke-width="1"/>
<path d="M188.5 113V116" stroke="#f4f4f4" stroke-width="1"/>
<path d="M192.5 111V116" stroke="#f4f4f4" stroke-width="1"/>
<path d="M196.5 113V116" stroke="#f4f4f4" stroke-width="1"/>
<path d="M201.5 113V116" stroke="#f4f4f4" stroke-width="1"/>
<path d="M205.5 113V116" stroke="#f4f4f4" stroke-width="1"/>
<path d="M209.5 113V116" stroke="#f4f4f4" stroke-width="1"/>
<path d="M214.5 101V116" stroke="#f4f4f4" stroke-width="1"/>
<text x="215.7" y="109.4" font-size="9" fill="#e8e8e8">60</text>
<path d="M218.5 113V116" stroke="#f4f4f4" stroke-width="1"/>
<path d="M222.5 113V116" stroke="#f4f4f4" stroke-width="1"/>
<path d="M226.5 113V116" stroke="#f4f4f4" stroke-width="1"/>
<path d="M231.5 113V116" stroke="#f4f4f4" stroke-width="1"/>
<path d="M235.5 111V116" stroke="#f4f4f4" stroke-width="1"/>
<path d="M239.5 113V116" stroke="#f4f4f4" stroke-width="1"/>
<path d="M243.5 113V116" stroke="#f4f4f4" stroke-width="1"/>
<path d="M248.5 113V116" stroke="#f4f4f4" stroke-width="1"/>
<path d="M252.5 113V116" stroke="#f4f4f4" stroke-width="1"/>
<path d="M256.5 101V116" stroke="#f4f4f4" stroke-width="1"/>
<text x="257.7" y="109.4" font-size="9" fill="#e8e8e8">80</text>
<path d="M260.5 113V116" stroke="#f4f4f4" stroke-width="1"/>
<path d="M265.5 113V116" stroke="#f4f4f4" stroke-width="1"/>
<path d="M269.5 113V116" stroke="#f4f4f4" stroke-width="1"/>
<path d="M273.5 113V116" stroke="#f4f4f4" stroke-width="1"/>
<path d="M278.5 111V116" stroke="#f4f4f4" stroke-width="1"/>
<path d="M282.5 113V116" stroke="#f4f4f4" stroke-width="1"/>
<path d="M286.5 113V116" stroke="#f4f4f4" stroke-width="1"/>
<path d="M290.5 113V116" stroke="#f4f4f4" stroke-width="1"/>
<path d="M295.5 113V116" stroke="#f4f4f4" stroke-width="1"/>
<path d="M299.5 101V116" stroke="#f4f4f4" stroke-width="1"/>
<text x="300.7" y="109.4" font-size="9" fill="#e8e8e8">100</text>
<path d="M303.5 113V116" stroke="#f4f4f4" stroke-width="1"/>
<path d="M307.5 113V116" stroke="#f4f4f4" stroke-width="1"/>
<path d="M312.5 113V116" stroke="#f4f4f4" stroke-width="1"/>
<path d="M316.5 113V116" stroke="#f4f4f4" stroke-width="1"/>
<path d="M320.5 111V116" stroke="#f4f4f4" stroke-width="1"/>
<path d="M324.5 113V116" stroke="#f4f4f4" stroke-width="1"/>
<path d="M329.5 113V116" stroke="#f4f4f4" stroke-width="1"/>
<path d="M333.5 113V116" stroke="#f4f4f4" stroke-width="1"/>
<path d="M337.5 113V116" stroke="#f4f4f4" stroke-width="1"/>
<path d="M342.5 101V116" stroke="#f4f4f4" stroke-width="1"/>
<text x="343.7" y="109.4" font-size="9" fill="#e8e8e8">120</text>
<path d="M346.5 113V116" stroke="#f4f4f4" stroke-width="1"/>
<path d="M350.5 113V116" stroke="#f4f4f4" stroke-width="1"/>
<path d="M354.5 113V116" stroke="#f4f4f4" stroke-width="1"/>
<path d="M359.5 113V116" stroke="#f4f4f4" stroke-width="1"/>
<path d="M363.5 111V116" stroke="#f4f4f4" stroke-width="1"/>
<path d="M367.5 113V116" stroke="#f4f4f4" stroke-width="1"/>
<path d="M371.5 113V116" stroke="#f4f4f4" stroke-width="1"/>
<path d="M376.5 113V116" stroke="#f4f4f4" stroke-width="1"/>
<path d="M380.5 113V116" stroke="#f4f4f4" stroke-width="1"/>
<path d="M384.5 101V116" stroke="#f4f4f4" stroke-width="1"/>
<text x="385.7" y="109.4" font-size="9" fill="#e8e8e8">140</text>
<path d="M388.5 113V116" stroke="#f4f4f4" stroke-width="1"/>
<path d="M393.5 113V116" stroke="#f4f4f4" stroke-width="1"/>
<path d="M397.5 113V116" stroke="#f4f4f4" stroke-width="1"/>
<path d="M401.5 113V116" stroke="#f4f4f4" stroke-width="1"/>
<path d="M406.5 111V116" stroke="#f4f4f4" stroke-width="1"/>
<path d="M410.5 113V116" stroke="#f4f4f4" stroke-width="1"/>
<path d="M414.5 113V116" stroke="#f4f4f4" stroke-width="1"/>
<path d="M418.5 113V116" stroke="#f4f4f4" stroke-width="1"/>
<path d="M423.5 113V116" stroke="#f4f4f4" stroke-width="1"/>
<path d="M427.5 101V116" stroke="#f4f4f4" stroke-width="1"/>
<text x="428.7" y="109.4" font-size="9" fill="#e8e8e8">160</text>
<path d="M431.5 113V116" stroke="#f4f4f4" stroke-width="1"/>
<path d="M435.5 113V116" stroke="#f4f4f4" stroke-width="1"/>
<path d="M440.5 113V116" stroke="#f4f4f4" stroke-width="1"/>
<path d="M444.5 113V116" stroke="#f4f4f4" stroke-width="1"/>
<path d="M448.5 111V116" stroke="#f4f4f4" stroke-width="1"/>
<path d="M452.5 113V116" stroke="#f4f4f4" stroke-width="1"/>
<path d="M457.5 113V116" stroke="#f4f4f4" stroke-width="1"/>
<path d="M461.5 113V116" stroke="#f4f4f4" stroke-width="1"/>
<path d="M465.5 113V116" stroke="#f4f4f4" stroke-width="1"/>
<path d="M470.5 101V116" stroke="#f4f4f4" stroke-width="1"/>
<text x="471.7" y="109.4" font-size="9" fill="#e8e8e8">180</text>
<path d="M474.5 113V116" stroke="#f4f4f4" stroke-width="1"/>
<path d="M478.5 113V116" stroke="#f4f4f4" stroke-width="1"/>
<path d="M482.5 113V116" stroke="#f4f4f4" stroke-width="1"/>
<path d="M487.5 113V116" stroke="#f4f4f4" stroke-width="1"/>
<path d="M491.5 111V116" stroke="#f4f4f4" stroke-width="1"/>
<path d="M495.5 113V116" stroke="#f4f4f4" stroke-width="1"/>
<path d="M499.5 113V116" stroke="#f4f4f4" stroke-width="1"/>
<path d="M504.5 113V116" stroke="#f4f4f4" stroke-width="1"/>
<path d="M508.5 113V116" stroke="#f4f4f4" stroke-width="1"/>
<path d="M512.5 101V116" stroke="#f4f4f4" stroke-width="1"/>
<text x="513.7" y="109.4" font-size="9" fill="#e8e8e8">200</text>
<path d="M516.5 113V116" stroke="#f4f4f4" stroke-width="1"/>
<path d="M521.5 113V116" stroke="#f4f4f4" stroke-width="1"/>
<path d="M525.5 113V116" stroke="#f4f4f4" stroke-width="1"/>
<path d="M529.5 113V116" stroke="#f4f4f4" stroke-width="1"/>
<path d="M534.5 111V116" stroke="#f4f4f4" stroke-width="1"/>
<path d="M538.5 113V116" stroke="#f4f4f4" stroke-width="1"/>
<path d="M542.5 113V116" stroke="#f4f4f4" stroke-width="1"/>
<path d="M546.5 113V116" stroke="#f4f4f4" stroke-width="1"/>
<path d="M551.5 113V116" stroke="#f4f4f4" stroke-width="1"/>
<path d="M555.5 101V116" stroke="#f4f4f4" stroke-width="1"/>
<text x="556.7" y="109.4" font-size="9" fill="#e8e8e8">220</text>
<path d="M559.5 113V116" stroke="#f4f4f4" stroke-width="1"/>
<path d="M563.5 113V116" stroke="#f4f4f4" stroke-width="1"/>
<path d="M568.5 113V116" stroke="#f4f4f4" stroke-width="1"/>
<path d="M572.5 113V116" stroke="#f4f4f4" stroke-width="1"/>
<path d="M576.5 111V116" stroke="#f4f4f4" stroke-width="1"/>
<path d="M580.5 113V116" stroke="#f4f4f4" stroke-width="1"/>
<path d="M585.5 113V116" stroke="#f4f4f4" stroke-width="1"/>
<path d="M589.5 113V116" stroke="#f4f4f4" stroke-width="1"/>
<path d="M593.5 113V116" stroke="#f4f4f4" stroke-width="1"/>
<path d="M598.5 101V116" stroke="#f4f4f4" stroke-width="1"/>
<text x="599.7" y="109.4" font-size="9" fill="#e8e8e8">240</text>
<path d="M602.5 113V116" stroke="#f4f4f4" stroke-width="1"/>
<path d="M606.5 113V116" stroke="#f4f4f4" stroke-width="1"/>
<path d="M610.5 113V116" stroke="#f4f4f4" stroke-width="1"/>
<path d="M615.5 113V116" stroke="#f4f4f4" stroke-width="1"/>
<path d="M619.5 111V116" stroke="#f4f4f4" stroke-width="1"/>
<path d="M623.5 113V116" stroke="#f4f4f4" stroke-width="1"/>
<path d="M627.5 113V116" stroke="#f4f4f4" stroke-width="1"/>
<path d="M632.5 113V116" stroke="#f4f4f4" stroke-width="1"/>
<path d="M636.5 113V116" stroke="#f4f4f4" stroke-width="1"/>
<path d="M640.5 101V116" stroke="#f4f4f4" stroke-width="1"/>
<text x="641.7" y="109.4" font-size="9" fill="#e8e8e8">260</text>
<path d="M644.5 113V116" stroke="#f4f4f4" stroke-width="1"/>
<path d="M649.5 113V116" stroke="#f4f4f4" stroke-width="1"/>
<path d="M653.5 113V116" stroke="#f4f4f4" stroke-width="1"/>
<path d="M657.5 113V116" stroke="#f4f4f4" stroke-width="1"/>
<path d="M662.5 111V116" stroke="#f4f4f4" stroke-width="1"/>
<path d="M666.5 113V116" stroke="#f4f4f4" stroke-width="1"/>
<path d="M670.5 113V116" stroke="#f4f4f4" stroke-width="1"/>
<path d="M674.5 113V116" stroke="#f4f4f4" stroke-width="1"/>
<path d="M679.5 113V116" stroke="#f4f4f4" stroke-width="1"/>
<path d="M683.5 101V116" stroke="#f4f4f4" stroke-width="1"/>
<text x="684.7" y="109.4" font-size="9" fill="#e8e8e8">280</text>
<path d="M687.5 113V116" stroke="#f4f4f4" stroke-width="1"/>
<path d="M691.5 113V116" stroke="#f4f4f4" stroke-width="1"/>
<path d="M696.5 113V116" stroke="#f4f4f4" stroke-width="1"/>
<path d="M700.5 113V116" stroke="#f4f4f4" stroke-width="1"/>
<path d="M704.5 111V116" stroke="#f4f4f4" stroke-width="1"/>
<path d="M708.5 113V116" stroke="#f4f4f4" stroke-width="1"/>
<path d="M713.5 113V116" stroke="#f4f4f4" stroke-width="1"/>
<path d="M717.5 113V116" stroke="#f4f4f4" stroke-width="1"/>
<path d="M721.5 113V116" stroke="#f4f4f4" stroke-width="1"/>
<path d="M726.5 101V116" stroke="#f4f4f4" stroke-width="1"/>
<text x="727.7" y="109.4" font-size="9" fill="#e8e8e8">300</text>
<path d="M730.5 113V116" stroke="#f4f4f4" stroke-width="1"/>
<path d="M734.5 113V116" stroke="#f4f4f4" stroke-width="1"/>
<path d="M738.5 113V116" stroke="#f4f4f4" stroke-width="1"/>
<path d="M743.5 113V116" stroke="#f4f4f4" stroke-width="1"/>
<path d="M747.5 111V116" stroke="#f4f4f4" stroke-width="1"/>
<path d="M751.5 113V116" stroke="#f4f4f4" stroke-width="1"/>
<path d="M745.5 101V116" stroke="#ff0000" stroke-width="1"/>
<rect x="37" y="116" width="16" height="539" fill="#2e2e2e"/>
<path d="M38 117.5H53" stroke="#f4f4f4" stroke-width="1"/>
<text transform="translate(46.6,120.5) rotate(-90)" text-anchor="end" font-size="9" fill="#e8e8e8">-20</text>
<path d="M50.5 121.5H53" stroke="#f4f4f4" stroke-width="1"/>
<path d="M50.5 126.5H53" stroke="#f4f4f4" stroke-width="1"/>
<path d="M50.5 130.5H53" stroke="#f4f4f4" stroke-width="1"/>
<path d="M50.5 134.5H53" stroke="#f4f4f4" stroke-width="1"/>
<path d="M48 138.5H53" stroke="#f4f4f4" stroke-width="1"/>
<path d="M50.5 143.5H53" stroke="#f4f4f4" stroke-width="1"/>
<path d="M50.5 147.5H53" stroke="#f4f4f4" stroke-width="1"/>
<path d="M50.5 151.5H53" stroke="#f4f4f4" stroke-width="1"/>
<path d="M50.5 155.5H53" stroke="#f4f4f4" stroke-width="1"/>
<path d="M38 160.5H53" stroke="#f4f4f4" stroke-width="1"/>
<text transform="translate(46.6,163.5) rotate(-90)" text-anchor="end" font-size="9" fill="#e8e8e8">0</text>
<path d="M50.5 164.5H53" stroke="#f4f4f4" stroke-width="1"/>
<path d="M50.5 168.5H53" stroke="#f4f4f4" stroke-width="1"/>
<path d="M50.5 172.5H53" stroke="#f4f4f4" stroke-width="1"/>
<path d="M50.5 177.5H53" stroke="#f4f4f4" stroke-width="1"/>
<path d="M48 181.5H53" stroke="#f4f4f4" stroke-width="1"/>
<path d="M50.5 185.5H53" stroke="#f4f4f4" stroke-width="1"/>
<path d="M50.5 190.5H53" stroke="#f4f4f4" stroke-width="1"/>
<path d="M50.5 194.5H53" stroke="#f4f4f4" stroke-width="1"/>
<path d="M50.5 198.5H53" stroke="#f4f4f4" stroke-width="1"/>
<path d="M38 202.5H53" stroke="#f4f4f4" stroke-width="1"/>
<text transform="translate(46.6,205.5) rotate(-90)" text-anchor="end" font-size="9" fill="#e8e8e8">20</text>
<path d="M50.5 207.5H53" stroke="#f4f4f4" stroke-width="1"/>
<path d="M50.5 211.5H53" stroke="#f4f4f4" stroke-width="1"/>
<path d="M50.5 215.5H53" stroke="#f4f4f4" stroke-width="1"/>
<path d="M50.5 219.5H53" stroke="#f4f4f4" stroke-width="1"/>
<path d="M48 224.5H53" stroke="#f4f4f4" stroke-width="1"/>
<path d="M50.5 228.5H53" stroke="#f4f4f4" stroke-width="1"/>
<path d="M50.5 232.5H53" stroke="#f4f4f4" stroke-width="1"/>
<path d="M50.5 236.5H53" stroke="#f4f4f4" stroke-width="1"/>
<path d="M50.5 241.5H53" stroke="#f4f4f4" stroke-width="1"/>
<path d="M38 245.5H53" stroke="#f4f4f4" stroke-width="1"/>
<text transform="translate(46.6,248.5) rotate(-90)" text-anchor="end" font-size="9" fill="#e8e8e8">40</text>
<path d="M50.5 249.5H53" stroke="#f4f4f4" stroke-width="1"/>
<path d="M50.5 254.5H53" stroke="#f4f4f4" stroke-width="1"/>
<path d="M50.5 258.5H53" stroke="#f4f4f4" stroke-width="1"/>
<path d="M50.5 262.5H53" stroke="#f4f4f4" stroke-width="1"/>
<path d="M48 266.5H53" stroke="#f4f4f4" stroke-width="1"/>
<path d="M50.5 271.5H53" stroke="#f4f4f4" stroke-width="1"/>
<path d="M50.5 275.5H53" stroke="#f4f4f4" stroke-width="1"/>
<path d="M50.5 279.5H53" stroke="#f4f4f4" stroke-width="1"/>
<path d="M50.5 283.5H53" stroke="#f4f4f4" stroke-width="1"/>
<path d="M38 288.5H53" stroke="#f4f4f4" stroke-width="1"/>
<text transform="translate(46.6,291.5) rotate(-90)" text-anchor="end" font-size="9" fill="#e8e8e8">60</text>
<path d="M50.5 292.5H53" stroke="#f4f4f4" stroke-width="1"/>
<path d="M50.5 296.5H53" stroke="#f4f4f4" stroke-width="1"/>
<path d="M50.5 300.5H53" stroke="#f4f4f4" stroke-width="1"/>
<path d="M50.5 305.5H53" stroke="#f4f4f4" stroke-width="1"/>
<path d="M48 309.5H53" stroke="#f4f4f4" stroke-width="1"/>
<path d="M50.5 313.5H53" stroke="#f4f4f4" stroke-width="1"/>
<path d="M50.5 318.5H53" stroke="#f4f4f4" stroke-width="1"/>
<path d="M50.5 322.5H53" stroke="#f4f4f4" stroke-width="1"/>
<path d="M50.5 326.5H53" stroke="#f4f4f4" stroke-width="1"/>
<path d="M38 330.5H53" stroke="#f4f4f4" stroke-width="1"/>
<text transform="translate(46.6,333.5) rotate(-90)" text-anchor="end" font-size="9" fill="#e8e8e8">80</text>
<path d="M50.5 335.5H53" stroke="#f4f4f4" stroke-width="1"/>
<path d="M50.5 339.5H53" stroke="#f4f4f4" stroke-width="1"/>
<path d="M50.5 343.5H53" stroke="#f4f4f4" stroke-width="1"/>
<path d="M50.5 347.5H53" stroke="#f4f4f4" stroke-width="1"/>
<path d="M48 352.5H53" stroke="#f4f4f4" stroke-width="1"/>
<path d="M50.5 356.5H53" stroke="#f4f4f4" stroke-width="1"/>
<path d="M50.5 360.5H53" stroke="#f4f4f4" stroke-width="1"/>
<path d="M50.5 364.5H53" stroke="#f4f4f4" stroke-width="1"/>
<path d="M50.5 369.5H53" stroke="#f4f4f4" stroke-width="1"/>
<path d="M38 373.5H53" stroke="#f4f4f4" stroke-width="1"/>
<text transform="translate(46.6,376.5) rotate(-90)" text-anchor="end" font-size="9" fill="#e8e8e8">100</text>
<path d="M50.5 377.5H53" stroke="#f4f4f4" stroke-width="1"/>
<path d="M50.5 382.5H53" stroke="#f4f4f4" stroke-width="1"/>
<path d="M50.5 386.5H53" stroke="#f4f4f4" stroke-width="1"/>
<path d="M50.5 390.5H53" stroke="#f4f4f4" stroke-width="1"/>
<path d="M48 394.5H53" stroke="#f4f4f4" stroke-width="1"/>
<path d="M50.5 399.5H53" stroke="#f4f4f4" stroke-width="1"/>
<path d="M50.5 403.5H53" stroke="#f4f4f4" stroke-width="1"/>
<path d="M50.5 407.5H53" stroke="#f4f4f4" stroke-width="1"/>
<path d="M50.5 411.5H53" stroke="#f4f4f4" stroke-width="1"/>
<path d="M38 416.5H53" stroke="#f4f4f4" stroke-width="1"/>
<text transform="translate(46.6,419.5) rotate(-90)" text-anchor="end" font-size="9" fill="#e8e8e8">120</text>
<path d="M50.5 420.5H53" stroke="#f4f4f4" stroke-width="1"/>
<path d="M50.5 424.5H53" stroke="#f4f4f4" stroke-width="1"/>
<path d="M50.5 428.5H53" stroke="#f4f4f4" stroke-width="1"/>
<path d="M50.5 433.5H53" stroke="#f4f4f4" stroke-width="1"/>
<path d="M48 437.5H53" stroke="#f4f4f4" stroke-width="1"/>
<path d="M50.5 441.5H53" stroke="#f4f4f4" stroke-width="1"/>
<path d="M50.5 446.5H53" stroke="#f4f4f4" stroke-width="1"/>
<path d="M50.5 450.5H53" stroke="#f4f4f4" stroke-width="1"/>
<path d="M50.5 454.5H53" stroke="#f4f4f4" stroke-width="1"/>
<path d="M38 458.5H53" stroke="#f4f4f4" stroke-width="1"/>
<text transform="translate(46.6,461.5) rotate(-90)" text-anchor="end" font-size="9" fill="#e8e8e8">140</text>
<path d="M50.5 463.5H53" stroke="#f4f4f4" stroke-width="1"/>
<path d="M50.5 467.5H53" stroke="#f4f4f4" stroke-width="1"/>
<path d="M50.5 471.5H53" stroke="#f4f4f4" stroke-width="1"/>
<path d="M50.5 475.5H53" stroke="#f4f4f4" stroke-width="1"/>
<path d="M48 480.5H53" stroke="#f4f4f4" stroke-width="1"/>
<path d="M50.5 484.5H53" stroke="#f4f4f4" stroke-width="1"/>
<path d="M50.5 488.5H53" stroke="#f4f4f4" stroke-width="1"/>
<path d="M50.5 492.5H53" stroke="#f4f4f4" stroke-width="1"/>
<path d="M50.5 497.5H53" stroke="#f4f4f4" stroke-width="1"/>
<path d="M38 501.5H53" stroke="#f4f4f4" stroke-width="1"/>
<text transform="translate(46.6,504.5) rotate(-90)" text-anchor="end" font-size="9" fill="#e8e8e8">160</text>
<path d="M50.5 505.5H53" stroke="#f4f4f4" stroke-width="1"/>
<path d="M50.5 510.5H53" stroke="#f4f4f4" stroke-width="1"/>
<path d="M50.5 514.5H53" stroke="#f4f4f4" stroke-width="1"/>
<path d="M50.5 518.5H53" stroke="#f4f4f4" stroke-width="1"/>
<path d="M48 522.5H53" stroke="#f4f4f4" stroke-width="1"/>
<path d="M50.5 527.5H53" stroke="#f4f4f4" stroke-width="1"/>
<path d="M50.5 531.5H53" stroke="#f4f4f4" stroke-width="1"/>
<path d="M50.5 535.5H53" stroke="#f4f4f4" stroke-width="1"/>
<path d="M50.5 539.5H53" stroke="#f4f4f4" stroke-width="1"/>
<path d="M38 544.5H53" stroke="#f4f4f4" stroke-width="1"/>
<text transform="translate(46.6,547.5) rotate(-90)" text-anchor="end" font-size="9" fill="#e8e8e8">180</text>
<path d="M50.5 548.5H53" stroke="#f4f4f4" stroke-width="1"/>
<path d="M50.5 552.5H53" stroke="#f4f4f4" stroke-width="1"/>
<path d="M50.5 556.5H53" stroke="#f4f4f4" stroke-width="1"/>
<path d="M50.5 561.5H53" stroke="#f4f4f4" stroke-width="1"/>
<path d="M48 565.5H53" stroke="#f4f4f4" stroke-width="1"/>
<path d="M50.5 569.5H53" stroke="#f4f4f4" stroke-width="1"/>
<path d="M50.5 574.5H53" stroke="#f4f4f4" stroke-width="1"/>
<path d="M50.5 578.5H53" stroke="#f4f4f4" stroke-width="1"/>
<path d="M50.5 582.5H53" stroke="#f4f4f4" stroke-width="1"/>
<path d="M38 586.5H53" stroke="#f4f4f4" stroke-width="1"/>
<text transform="translate(46.6,589.5) rotate(-90)" text-anchor="end" font-size="9" fill="#e8e8e8">200</text>
<path d="M50.5 591.5H53" stroke="#f4f4f4" stroke-width="1"/>
<path d="M50.5 595.5H53" stroke="#f4f4f4" stroke-width="1"/>
<path d="M50.5 599.5H53" stroke="#f4f4f4" stroke-width="1"/>
<path d="M50.5 603.5H53" stroke="#f4f4f4" stroke-width="1"/>
<path d="M48 608.5H53" stroke="#f4f4f4" stroke-width="1"/>
<path d="M50.5 612.5H53" stroke="#f4f4f4" stroke-width="1"/>
<path d="M50.5 616.5H53" stroke="#f4f4f4" stroke-width="1"/>
<path d="M50.5 620.5H53" stroke="#f4f4f4" stroke-width="1"/>
<path d="M50.5 625.5H53" stroke="#f4f4f4" stroke-width="1"/>
<path d="M38 629.5H53" stroke="#f4f4f4" stroke-width="1"/>
<text transform="translate(46.6,632.5) rotate(-90)" text-anchor="end" font-size="9" fill="#e8e8e8">220</text>
<path d="M50.5 633.5H53" stroke="#f4f4f4" stroke-width="1"/>
<path d="M50.5 638.5H53" stroke="#f4f4f4" stroke-width="1"/>
<path d="M50.5 642.5H53" stroke="#f4f4f4" stroke-width="1"/>
<path d="M50.5 646.5H53" stroke="#f4f4f4" stroke-width="1"/>
<path d="M48 650.5H53" stroke="#f4f4f4" stroke-width="1"/>
<path d="M38 642.5H53" stroke="#ff0000" stroke-width="1"/>
<rect x="96" y="169" width="633" height="448" fill="#969696"/>
<defs><clipPath id="pc"><rect x="87" y="161" width="632" height="447"/></clipPath><clipPath id="ic"><rect x="87" y="417" width="218" height="185"/></clipPath><filter id="bl" x="-20%" y="-20%" width="140%" height="140%"><feGaussianBlur stdDeviation="2.2"/></filter><filter id="bl1" x="-20%" y="-20%" width="140%" height="140%"><feGaussianBlur stdDeviation="1"/></filter></defs>
<g clip-path="url(#pc)">
<rect x="87" y="161" width="632" height="447" fill="#aad3df"/>
<path d="M219.5 158.0 L221.3 167.0 L223.9 175.8 L225.7 184.5 L227.4 193.3 L229.2 200.3 L231.8 207.3 L232.1 216.0 L230.0 224.8 L230.9 230.0 L229.2 237.0 L226.5 244.0 L225.7 251.0 L229.2 258.0 L234.4 266.9 L236.9 272.0 L239.5 280.5 L243.0 291.0 L247.4 301.5 L253.5 312.0 L258.8 320.8 L261.4 327.8 L263.2 336.6 L265.8 345.3 L271.0 352.3 L275.4 359.3 L280.7 366.0 L285.5 371.0 L289.0 376.0 L291.3 381.0 L297.5 391.0 L304.5 401.5 L310.7 410.3 L315.0 420.8 L317.7 429.6 L319.4 440.0 L322.9 447.0 L329.0 451.5 L337.8 452.3 L346.6 452.3 L353.6 453.2 L360.6 455.8 L367.6 457.6 L372.0 460.0 L376.0 463.5 L381.6 466.5 L386.5 472.0 L391.0 478.5 L396.3 483.3 L405.0 486.8 L411.2 493.8 L412.9 502.6 L414.7 509.6 L419.0 514.8 L422.6 520.0 L427.8 527.0 L431.3 535.8 L434.5 545.5 L438.3 553.4 L441.5 561.5 L445.6 570.3 L449.3 583.5 L454.0 596.3 L458.0 609.0 L720.0 609.0 L720.0 158.0Z" fill="#f2efe9"/>
<path d="M211.5 159.5 L213.3 168.5 L215.9 177.3 L217.7 186.0 L219.4 194.8 L221.2 201.8 L223.8 208.8 L224.1 217.5 L222.0 226.3 L222.9 231.5 L221.2 238.5 L218.5 245.5 L217.7 252.5 L221.2 259.5 L226.4 268.4 L228.9 273.5 L231.5 282.0 L235.0 292.5 L239.4 303.0 L245.5 313.5 L250.8 322.3 L253.4 329.3 L255.2 338.1 L257.8 346.8 L263.0 353.8 L267.4 360.8 L272.7 367.5 L277.5 372.5 L281.0 377.5 L283.3 382.5 L289.5 392.5 L296.5 403.0 L302.7 411.8 L307.0 422.3 L309.7 431.1 L311.4 441.5 L314.9 448.5 L321.0 453.0 L329.8 453.8 L338.6 453.8 L345.6 454.7 L352.6 457.3 L359.6 459.1 L364.0 461.5 L368.0 465.0 L373.6 468.0 L378.5 473.5 L383.0 480.0 L388.3 484.8 L397.0 488.3 L403.2 495.3 L404.9 504.1 L406.7 511.1 L411.0 516.3 L414.6 521.5 L419.8 528.5 L423.3 537.3 L426.5 547.0 L430.3 554.9 L433.5 563.0 L437.6 571.8 L441.3 585.0 L446.0 597.8 L450.0 610.5" fill="none" stroke="#b29ad0" stroke-width="1.5" opacity="0.9" stroke-linejoin="round"/>
<path d="M219.5 158.0 L221.3 167.0 L223.9 175.8 L225.7 184.5 L227.4 193.3 L229.2 200.3 L231.8 207.3 L232.1 216.0 L230.0 224.8 L230.9 230.0 L229.2 237.0 L226.5 244.0 L225.7 251.0 L229.2 258.0 L234.4 266.9 L236.9 272.0 L239.5 280.5 L243.0 291.0 L247.4 301.5 L253.5 312.0 L258.8 320.8 L261.4 327.8 L263.2 336.6 L265.8 345.3 L271.0 352.3 L275.4 359.3 L280.7 366.0 L285.5 371.0 L289.0 376.0 L291.3 381.0 L297.5 391.0 L304.5 401.5 L310.7 410.3 L315.0 420.8 L317.7 429.6 L319.4 440.0 L322.9 447.0 L329.0 451.5 L337.8 452.3 L346.6 452.3 L353.6 453.2 L360.6 455.8 L367.6 457.6 L372.0 460.0 L376.0 463.5 L381.6 466.5 L386.5 472.0 L391.0 478.5 L396.3 483.3 L405.0 486.8 L411.2 493.8 L412.9 502.6 L414.7 509.6 L419.0 514.8 L422.6 520.0 L427.8 527.0 L431.3 535.8 L434.5 545.5 L438.3 553.4 L441.5 561.5 L445.6 570.3 L449.3 583.5 L454.0 596.3 L458.0 609.0" fill="none" stroke="#9fc4d4" stroke-width="0.8"/>
<g filter="url(#bl)"><ellipse cx="247" cy="215" rx="12" ry="28" transform="rotate(-5 247 215)" fill="#cfe3c0" opacity="0.55"/><ellipse cx="262" cy="190" rx="16" ry="10" transform="rotate(0 262 190)" fill="#cfe3c0" opacity="0.45"/><ellipse cx="240" cy="255" rx="7" ry="18" transform="rotate(-15 240 255)" fill="#cfe3c0" opacity="0.55"/><ellipse cx="255" cy="282" rx="6" ry="14" transform="rotate(-25 255 282)" fill="#cfe3c0" opacity="0.4"/><ellipse cx="300" cy="215" rx="10" ry="16" transform="rotate(20 300 215)" fill="#cfe3c0" opacity="0.4"/><ellipse cx="296" cy="262" rx="6" ry="22" transform="rotate(-20 296 262)" fill="#cfe3c0" opacity="0.5"/><ellipse cx="312" cy="300" rx="6" ry="20" transform="rotate(-30 312 300)" fill="#cfe3c0" opacity="0.5"/><ellipse cx="330" cy="335" rx="6" ry="18" transform="rotate(-35 330 335)" fill="#cfe3c0" opacity="0.45"/><ellipse cx="345" cy="372" rx="7" ry="16" transform="rotate(-35 345 372)" fill="#cfe3c0" opacity="0.45"/><ellipse cx="281" cy="175" rx="12" ry="8" transform="rotate(0 281 175)" fill="#cfe3c0" opacity="0.35"/><ellipse cx="330" cy="180" rx="8" ry="5" transform="rotate(0 330 180)" fill="#e8e6b0" opacity="0.3"/><ellipse cx="398" cy="300" rx="4" ry="22" transform="rotate(10 398 300)" fill="#cfe3c0" opacity="0.45"/><ellipse cx="415" cy="290" rx="4" ry="26" transform="rotate(12 415 290)" fill="#cfe3c0" opacity="0.45"/><ellipse cx="432" cy="300" rx="4" ry="22" transform="rotate(10 432 300)" fill="#cfe3c0" opacity="0.4"/><ellipse cx="448" cy="250" rx="3" ry="18" transform="rotate(15 448 250)" fill="#cfe3c0" opacity="0.4"/><ellipse cx="382" cy="330" rx="4" ry="14" transform="rotate(15 382 330)" fill="#cfe3c0" opacity="0.35"/><ellipse cx="480" cy="300" rx="6" ry="40" transform="rotate(5 480 300)" fill="#dfe6b8" opacity="0.45"/><ellipse cx="470" cy="340" rx="5" ry="22" transform="rotate(15 470 340)" fill="#cfe3c0" opacity="0.4"/><ellipse cx="448" cy="205" rx="3" ry="12" transform="rotate(15 448 205)" fill="#cfe3c0" opacity="0.35"/><ellipse cx="462" cy="330" rx="3" ry="16" transform="rotate(10 462 330)" fill="#cfe3c0" opacity="0.35"/><ellipse cx="530" cy="345" rx="10" ry="16" transform="rotate(30 530 345)" fill="#cfe3c0" opacity="0.4"/><ellipse cx="515" cy="330" rx="4" ry="16" transform="rotate(10 515 330)" fill="#cfe3c0" opacity="0.35"/><ellipse cx="550" cy="380" rx="8" ry="12" transform="rotate(0 550 380)" fill="#cfe3c0" opacity="0.35"/><ellipse cx="690" cy="230" rx="14" ry="18" transform="rotate(0 690 230)" fill="#cfe3c0" opacity="0.35"/><ellipse cx="705" cy="300" rx="6" ry="22" transform="rotate(0 705 300)" fill="#cfe3c0" opacity="0.3"/><ellipse cx="712" cy="190" rx="5" ry="10" transform="rotate(0 712 190)" fill="#cfe3c0" opacity="0.3"/><ellipse cx="545" cy="400" rx="7" ry="10" transform="rotate(0 545 400)" fill="#cfe3c0" opacity="0.4"/><ellipse cx="560" cy="425" rx="9" ry="6" transform="rotate(20 560 425)" fill="#cfe3c0" opacity="0.4"/><ellipse cx="575" cy="470" rx="5" ry="7" transform="rotate(0 575 470)" fill="#cfe3c0" opacity="0.3"/><ellipse cx="675" cy="455" rx="10" ry="7" transform="rotate(0 675 455)" fill="#cfe3c0" opacity="0.4"/><ellipse cx="690" cy="395" rx="3" ry="10" transform="rotate(0 690 395)" fill="#cfe3c0" opacity="0.3"/><ellipse cx="400" cy="425" rx="14" ry="7" transform="rotate(0 400 425)" fill="#e3e8bd" opacity="0.5"/><ellipse cx="360" cy="440" rx="10" ry="6" transform="rotate(-20 360 440)" fill="#cfe3c0" opacity="0.4"/><ellipse cx="430" cy="470" rx="8" ry="5" transform="rotate(0 430 470)" fill="#cfe3c0" opacity="0.35"/><ellipse cx="465" cy="560" rx="4" ry="10" transform="rotate(0 465 560)" fill="#cfe3c0" opacity="0.3"/><ellipse cx="300" cy="395" rx="5" ry="10" transform="rotate(-30 300 395)" fill="#cfe3c0" opacity="0.35"/><ellipse cx="412.8" cy="236.9" rx="2.8" ry="6.7" transform="rotate(12.0 412.8 236.9)" fill="#cfe3c0" opacity="0.34"/><ellipse cx="486.6" cy="246.1" rx="1.7" ry="10.2" transform="rotate(5.0 486.6 246.1)" fill="#cfe3c0" opacity="0.39"/><ellipse cx="476.2" cy="233.0" rx="1.9" ry="12.3" transform="rotate(22.0 476.2 233.0)" fill="#cfe3c0" opacity="0.39"/><ellipse cx="378.2" cy="247.1" rx="2.6" ry="7.3" transform="rotate(10.0 378.2 247.1)" fill="#dde6b6" opacity="0.39"/><ellipse cx="410.9" cy="333.3" rx="1.9" ry="11.8" transform="rotate(15.0 410.9 333.3)" fill="#dde6b6" opacity="0.34"/><ellipse cx="461.7" cy="296.8" rx="2.7" ry="11.0" transform="rotate(12.0 461.7 296.8)" fill="#cfe3c0" opacity="0.44"/><ellipse cx="445.8" cy="280.7" rx="2.1" ry="13.9" transform="rotate(16.0 445.8 280.7)" fill="#dde6b6" opacity="0.31"/><ellipse cx="409.8" cy="286.8" rx="2.2" ry="10.5" transform="rotate(14.0 409.8 286.8)" fill="#dde6b6" opacity="0.27"/><ellipse cx="424.7" cy="324.8" rx="1.8" ry="10.9" transform="rotate(0.0 424.7 324.8)" fill="#dde6b6" opacity="0.42"/><ellipse cx="444.2" cy="341.9" rx="2.1" ry="13.0" transform="rotate(14.0 444.2 341.9)" fill="#cfe3c0" opacity="0.39"/><ellipse cx="380.7" cy="228.6" rx="2.0" ry="13.0" transform="rotate(1.0 380.7 228.6)" fill="#cfe3c0" opacity="0.43"/><ellipse cx="453.5" cy="359.0" rx="3.1" ry="8.8" transform="rotate(9.0 453.5 359.0)" fill="#cfe3c0" opacity="0.42"/><ellipse cx="490.5" cy="266.5" rx="2.7" ry="10.9" transform="rotate(5.0 490.5 266.5)" fill="#dde6b6" opacity="0.32"/><ellipse cx="403.2" cy="271.7" rx="3.2" ry="6.8" transform="rotate(10.0 403.2 271.7)" fill="#cfe3c0" opacity="0.39"/><ellipse cx="475.2" cy="340.3" rx="2.1" ry="10.2" transform="rotate(8.0 475.2 340.3)" fill="#cfe3c0" opacity="0.47"/><ellipse cx="391.0" cy="240.6" rx="2.0" ry="8.3" transform="rotate(11.0 391.0 240.6)" fill="#cfe3c0" opacity="0.4"/><ellipse cx="407.5" cy="236.1" rx="2.6" ry="12.1" transform="rotate(7.0 407.5 236.1)" fill="#dde6b6" opacity="0.28"/><ellipse cx="491.7" cy="310.0" rx="3.0" ry="10.6" transform="rotate(20.0 491.7 310.0)" fill="#dde6b6" opacity="0.49"/><ellipse cx="472.5" cy="271.9" rx="2.3" ry="7.0" transform="rotate(15.0 472.5 271.9)" fill="#cfe3c0" opacity="0.27"/><ellipse cx="496.1" cy="278.9" rx="1.7" ry="12.0" transform="rotate(2.0 496.1 278.9)" fill="#dde6b6" opacity="0.39"/><ellipse cx="384.8" cy="267.7" rx="1.6" ry="14.7" transform="rotate(14.0 384.8 267.7)" fill="#cfe3c0" opacity="0.29"/><ellipse cx="492.4" cy="302.3" rx="2.4" ry="7.2" transform="rotate(11.0 492.4 302.3)" fill="#cfe3c0" opacity="0.49"/><ellipse cx="433.0" cy="227.5" rx="1.7" ry="9.4" transform="rotate(6.0 433.0 227.5)" fill="#cfe3c0" opacity="0.46"/><ellipse cx="437.1" cy="244.8" rx="3.4" ry="9.6" transform="rotate(16.0 437.1 244.8)" fill="#dde6b6" opacity="0.48"/><ellipse cx="409.6" cy="308.2" rx="1.7" ry="14.5" transform="rotate(12.0 409.6 308.2)" fill="#cfe3c0" opacity="0.48"/><ellipse cx="469.3" cy="292.2" rx="3.1" ry="9.3" transform="rotate(5.0 469.3 292.2)" fill="#cfe3c0" opacity="0.45"/><ellipse cx="549.3" cy="369.6" rx="3.0" ry="8.3" transform="rotate(20.0 549.3 369.6)" fill="#cfe3c0" opacity="0.34"/><ellipse cx="559.4" cy="367.2" rx="2.4" ry="7.9" transform="rotate(22.0 559.4 367.2)" fill="#dde6b6" opacity="0.34"/><ellipse cx="559.3" cy="381.2" rx="2.2" ry="8.2" transform="rotate(13.0 559.3 381.2)" fill="#cfe3c0" opacity="0.3"/><ellipse cx="531.5" cy="383.7" rx="2.7" ry="6.0" transform="rotate(29.0 531.5 383.7)" fill="#dde6b6" opacity="0.34"/><ellipse cx="509.7" cy="356.1" rx="3.3" ry="13.8" transform="rotate(26.0 509.7 356.1)" fill="#cfe3c0" opacity="0.37"/><ellipse cx="528.9" cy="354.0" rx="1.7" ry="15.5" transform="rotate(25.0 528.9 354.0)" fill="#dde6b6" opacity="0.37"/><ellipse cx="557.1" cy="361.6" rx="1.8" ry="7.3" transform="rotate(11.0 557.1 361.6)" fill="#dde6b6" opacity="0.48"/><ellipse cx="513.0" cy="370.3" rx="3.5" ry="12.6" transform="rotate(16.0 513.0 370.3)" fill="#cfe3c0" opacity="0.39"/><ellipse cx="506.2" cy="367.9" rx="3.0" ry="7.0" transform="rotate(25.0 506.2 367.9)" fill="#cfe3c0" opacity="0.28"/><ellipse cx="550.4" cy="317.9" rx="2.0" ry="8.9" transform="rotate(13.0 550.4 317.9)" fill="#cfe3c0" opacity="0.4"/><ellipse cx="682.5" cy="279.3" rx="3.2" ry="10.4" transform="rotate(9.0 682.5 279.3)" fill="#dde6b6" opacity="0.42"/><ellipse cx="672.8" cy="289.7" rx="4.5" ry="9.2" transform="rotate(0.0 672.8 289.7)" fill="#cfe3c0" opacity="0.25"/><ellipse cx="700.6" cy="251.1" rx="5.3" ry="6.9" transform="rotate(-9.0 700.6 251.1)" fill="#cfe3c0" opacity="0.4"/><ellipse cx="683.4" cy="215.7" rx="4.6" ry="9.3" transform="rotate(6.0 683.4 215.7)" fill="#dde6b6" opacity="0.28"/><ellipse cx="644.4" cy="198.9" rx="3.1" ry="6.6" transform="rotate(-2.0 644.4 198.9)" fill="#cfe3c0" opacity="0.26"/><ellipse cx="674.6" cy="251.6" rx="4.5" ry="9.1" transform="rotate(4.0 674.6 251.6)" fill="#dde6b6" opacity="0.36"/><ellipse cx="703.0" cy="238.5" rx="3.7" ry="9.1" transform="rotate(9.0 703.0 238.5)" fill="#dde6b6" opacity="0.48"/><ellipse cx="709.6" cy="200.3" rx="4.3" ry="8.5" transform="rotate(-3.0 709.6 200.3)" fill="#dde6b6" opacity="0.33"/><ellipse cx="546.8" cy="380.5" rx="5.0" ry="7.9" transform="rotate(19.0 546.8 380.5)" fill="#dde6b6" opacity="0.29"/><ellipse cx="575.0" cy="402.5" rx="3.8" ry="4.7" transform="rotate(9.0 575.0 402.5)" fill="#cfe3c0" opacity="0.44"/><ellipse cx="557.9" cy="411.5" rx="6.0" ry="8.2" transform="rotate(1.0 557.9 411.5)" fill="#dde6b6" opacity="0.36"/><ellipse cx="558.3" cy="406.6" rx="4.1" ry="4.5" transform="rotate(6.0 558.3 406.6)" fill="#cfe3c0" opacity="0.33"/><ellipse cx="560.8" cy="376.4" rx="4.0" ry="7.1" transform="rotate(10.0 560.8 376.4)" fill="#cfe3c0" opacity="0.27"/><ellipse cx="598.0" cy="382.9" rx="3.8" ry="4.2" transform="rotate(16.0 598.0 382.9)" fill="#cfe3c0" opacity="0.32"/><ellipse cx="587.4" cy="438.7" rx="5.0" ry="8.7" transform="rotate(7.0 587.4 438.7)" fill="#dde6b6" opacity="0.38"/><ellipse cx="569.9" cy="427.5" rx="3.3" ry="4.3" transform="rotate(14.0 569.9 427.5)" fill="#cfe3c0" opacity="0.36"/><ellipse cx="548.8" cy="376.3" rx="3.3" ry="5.3" transform="rotate(12.0 548.8 376.3)" fill="#cfe3c0" opacity="0.31"/><ellipse cx="590.4" cy="409.0" rx="4.0" ry="6.8" transform="rotate(20.0 590.4 409.0)" fill="#cfe3c0" opacity="0.32"/><ellipse cx="643.2" cy="456.8" rx="6.8" ry="7.9" transform="rotate(-6.0 643.2 456.8)" fill="#cfe3c0" opacity="0.3"/><ellipse cx="687.2" cy="442.5" rx="3.8" ry="5.8" transform="rotate(4.0 687.2 442.5)" fill="#cfe3c0" opacity="0.32"/><ellipse cx="714.6" cy="403.0" rx="3.1" ry="6.0" transform="rotate(11.0 714.6 403.0)" fill="#cfe3c0" opacity="0.38"/><ellipse cx="710.1" cy="408.5" rx="6.3" ry="5.7" transform="rotate(-1.0 710.1 408.5)" fill="#cfe3c0" opacity="0.46"/><ellipse cx="712.8" cy="424.6" rx="3.9" ry="4.9" transform="rotate(-8.0 712.8 424.6)" fill="#dde6b6" opacity="0.47"/><ellipse cx="687.7" cy="432.4" rx="4.4" ry="4.2" transform="rotate(-9.0 687.7 432.4)" fill="#dde6b6" opacity="0.27"/><ellipse cx="321.8" cy="189.4" rx="3.2" ry="8.3" transform="rotate(27.0 321.8 189.4)" fill="#cfe3c0" opacity="0.38"/><ellipse cx="302.7" cy="201.2" rx="3.1" ry="5.9" transform="rotate(24.0 302.7 201.2)" fill="#cfe3c0" opacity="0.25"/><ellipse cx="327.4" cy="213.8" rx="4.6" ry="6.2" transform="rotate(41.0 327.4 213.8)" fill="#cfe3c0" opacity="0.33"/><ellipse cx="274.4" cy="185.1" rx="3.3" ry="6.4" transform="rotate(33.0 274.4 185.1)" fill="#cfe3c0" opacity="0.31"/><ellipse cx="268.2" cy="206.8" rx="3.4" ry="7.9" transform="rotate(27.0 268.2 206.8)" fill="#dde6b6" opacity="0.32"/><ellipse cx="277.8" cy="196.4" rx="4.6" ry="8.8" transform="rotate(33.0 277.8 196.4)" fill="#dde6b6" opacity="0.43"/><ellipse cx="288.5" cy="184.7" rx="6.0" ry="5.7" transform="rotate(35.0 288.5 184.7)" fill="#cfe3c0" opacity="0.41"/><ellipse cx="318.1" cy="202.2" rx="4.5" ry="7.1" transform="rotate(34.0 318.1 202.2)" fill="#dde6b6" opacity="0.38"/><ellipse cx="342.7" cy="323.9" rx="3.6" ry="8.1" transform="rotate(-31.0 342.7 323.9)" fill="#dde6b6" opacity="0.45"/><ellipse cx="337.8" cy="340.1" rx="2.5" ry="8.2" transform="rotate(-44.0 337.8 340.1)" fill="#cfe3c0" opacity="0.34"/><ellipse cx="316.4" cy="308.7" rx="2.1" ry="8.2" transform="rotate(-35.0 316.4 308.7)" fill="#cfe3c0" opacity="0.31"/><ellipse cx="290.2" cy="353.7" rx="3.5" ry="12.0" transform="rotate(-35.0 290.2 353.7)" fill="#cfe3c0" opacity="0.41"/><ellipse cx="342.2" cy="311.6" rx="3.6" ry="14.8" transform="rotate(-42.0 342.2 311.6)" fill="#cfe3c0" opacity="0.44"/><ellipse cx="341.8" cy="376.8" rx="3.0" ry="11.1" transform="rotate(-36.0 341.8 376.8)" fill="#cfe3c0" opacity="0.42"/><ellipse cx="333.2" cy="333.6" rx="2.2" ry="9.2" transform="rotate(-41.0 333.2 333.6)" fill="#cfe3c0" opacity="0.44"/><ellipse cx="333.5" cy="267.3" rx="3.0" ry="11.9" transform="rotate(-24.0 333.5 267.3)" fill="#cfe3c0" opacity="0.27"/><ellipse cx="337.3" cy="287.8" rx="3.0" ry="11.7" transform="rotate(-36.0 337.3 287.8)" fill="#dde6b6" opacity="0.28"/><ellipse cx="303.9" cy="377.2" rx="3.9" ry="8.1" transform="rotate(-36.0 303.9 377.2)" fill="#cfe3c0" opacity="0.45"/><ellipse cx="261.9" cy="229.0" rx="6.7" ry="13.6" transform="rotate(-19.0 261.9 229.0)" fill="#dde6b6" opacity="0.37"/><ellipse cx="251.5" cy="271.5" rx="4.4" ry="12.9" transform="rotate(-8.0 251.5 271.5)" fill="#dde6b6" opacity="0.53"/><ellipse cx="248.0" cy="237.3" rx="6.6" ry="10.4" transform="rotate(-17.0 248.0 237.3)" fill="#dde6b6" opacity="0.54"/><ellipse cx="249.9" cy="222.6" rx="4.4" ry="10.1" transform="rotate(-13.0 249.9 222.6)" fill="#cfe3c0" opacity="0.52"/><ellipse cx="247.1" cy="225.4" rx="5.2" ry="13.6" transform="rotate(-16.0 247.1 225.4)" fill="#dde6b6" opacity="0.35"/><path d="M290.5 370L323.8 370L353.6 391L378.1 410.3L378.1 427.8L357.1 422.6L332.6 405L311.5 391L294 377Z" fill="#d6e8c8" opacity="0.55"/><path d="M357 437L378 436L380 450L360 451Z" fill="#cfe3c0" opacity="0.6"/><path d="M388 419L400 418L401 428L389 428Z" fill="#e3e8bd" opacity="0.6"/><path d="M300 262L318 290L338 330L352 368L366 392L356 396L338 372L322 338L304 300L292 270Z" fill="#d6e8c8" opacity="0.5"/></g>
<path d="M500.6 609.0 L494.2 598.0 L489.4 588.3 L486.2 577.0 L483.8 567.4 L481.4 557.8 L480.6 548.2 L481.4 537.7 L489.4 539.3 L499.0 545.8 L505.5 543.3 L513.5 548.2 L516.7 553.0 L526.3 556.2 L527.9 564.2 L529.5 572.2 L534.4 581.9 L536.8 591.5 L540.8 601.1 L544.8 609.0Z" fill="#aad3df"/>
<path d="M528 204l5-1 8 6 6 9 5 14 1 7-6 1-8-3-5-10-3-12z" fill="#aad3df"/>
<path d="M447 482.4L451.5 481.5L455.8 486.8L458.5 492L456.7 494.7L452.3 492L448.8 487.7Z" fill="#aad3df"/><path d="M275.4 328.7L278 328.700L279 340L283.300 347L281.600 348.800L276.300 343.600L273.700 336.600Z" fill="#aad3df"/>
<ellipse cx="341" cy="295" rx="2.300" ry="4.500" fill="#aad3df"/>
<path d="M350 258l3-2 2 4 1 5-3 1-2-4z" fill="#aad3df"/>
<g fill="#7db7ea"><rect x="376" y="270" width="9" height="1"/><rect x="379" y="264" width="4" height="1"/><rect x="386" y="268" width="3" height="1"/><rect x="359" y="247" width="2" height="1"/><rect x="352" y="241" width="2" height="1"/><rect x="420" y="298" width="3" height="1"/><rect x="444" y="333" width="2" height="1"/><rect x="449" y="414" width="3" height="1"/><rect x="462" y="426" width="2" height="1"/><rect x="360" y="265" width="2" height="1"/><rect x="370" y="256" width="2" height="1"/></g>
<path d="M478.2 517.7L484.6 516L497.4 520.9L507 527.3L509.5 533.7L507 540.1L500.6 545L494.2 541.7L486.2 535.3L480.6 528.9Z" fill="#f3e6c0" opacity="0.95"/>
<g fill="none" stroke="#b29ad0" stroke-width="1.300" opacity="0.85"><path d="M318 459c5-3 20-2 27 1s4 7-4 7-18-1-22-3-4-3-1-5z"/><path d="M345 473c5-3 17-2 22 2s6 10 2 14-10 3-13-1-4-4-9-6-6-6-2-9z"/><path d="M371 489c4-2 10 0 14 5s4 12 1 15-9 1-11-4-2-6-5-9-2-6 1-7z"/></g><g fill="#f6e9e4"><ellipse cx="328" cy="462.500" rx="3.500" ry="1.200"/><ellipse cx="337" cy="463.500" rx="3" ry="1.100"/><ellipse cx="357" cy="480" rx="2.200" ry="1.200" transform="rotate(30 357 480)"/><ellipse cx="379" cy="499" rx="1.300" ry="2.600" transform="rotate(-25 379 499)"/><ellipse cx="366" cy="487" rx="1.500" ry="1"/></g>
<path d="M234 192.700H581.700" fill="none" stroke="#e1cde5" stroke-width="1.25"/><path d="M421.700 160V192.700" fill="none" stroke="#e1cde5" stroke-width="1.25"/><path d="M342.300 192.700V298L438 388L486.700 429" fill="none" stroke="#e1cde5" stroke-width="1.25"/><path d="M501.700 192.700V386" fill="none" stroke="#e1cde5" stroke-width="1.25"/><path d="M581.700 160V229H720" fill="none" stroke="#e1cde5" stroke-width="1.25"/><path d="M636 229V551" fill="none" stroke="#e1cde5" stroke-width="1.25"/><path d="M501.700 366.700H720" fill="none" stroke="#e1cde5" stroke-width="1.25"/><path d="M486.700 429C492 440 500 452 498 458S488 472 489 480 485 492 485 500 488 508 490 513" fill="none" stroke="#e1cde5" stroke-width="1.2"/><path d="M415 512.500L488 509" fill="none" stroke="#dfb6e0" stroke-width="1.6"/><path d="M490 513L581.700 551H658V537.500H702L712 541L720 541" fill="none" stroke="#dfb6e0" stroke-width="1.6"/><path d="M702 537.500C705 545 700 550 703 556" fill="none" stroke="#e1cde5" stroke-width="1"/><path d="M642 551C648 560 642 568 646 580S648 598 647 607" fill="none" stroke="#e1cde5" stroke-width="1"/>
<rect x="260.500" y="326.500" width="39" height="34" fill="#ff6464" fill-opacity="0.62" stroke="#f07070" stroke-opacity="0.5" stroke-width="1"/>
<text x="301.7" y="309.1" font-size="13.2" fill="#3d3d3d" text-anchor="middle" font-family="DejaVu Sans Condensed, DejaVu Sans, sans-serif" letter-spacing="0" stroke="#ffffff" stroke-opacity="0.75" stroke-width="2.2" paint-order="stroke" stroke-linejoin="round">Sacramento</text>
<circle cx="301.5" cy="313.5" r="1.7" fill="#f6f6f6" stroke="#7a7a7a" stroke-width="0.7"/>
<text x="236.0" y="361.8" font-size="13.2" fill="#3d3d3d" text-anchor="start" font-family="DejaVu Sans Condensed, DejaVu Sans, sans-serif" letter-spacing="0" stroke="#ffffff" stroke-opacity="0.75" stroke-width="2.2" paint-order="stroke" stroke-linejoin="round">San Jose</text>
<text x="347.6" y="390.1" font-size="13.2" fill="#3d3d3d" text-anchor="middle" font-family="DejaVu Sans Condensed, DejaVu Sans, sans-serif" letter-spacing="0" stroke="#ffffff" stroke-opacity="0.75" stroke-width="2.2" paint-order="stroke" stroke-linejoin="round">Fresno</text>
<circle cx="347.5" cy="376.0" r="1.7" fill="#f6f6f6" stroke="#7a7a7a" stroke-width="0.7"/>
<text x="338.2" y="359.1" font-size="11.8" fill="#875a8c" text-anchor="middle" font-family="DejaVu Sans Condensed, DejaVu Sans, sans-serif" letter-spacing="0" font-style="italic" stroke="#ffffff" stroke-opacity="0.75" stroke-width="2.2" paint-order="stroke" stroke-linejoin="round">California</text>
<text x="429.7" y="317.8" font-size="11.8" fill="#875a8c" text-anchor="middle" font-family="DejaVu Sans Condensed, DejaVu Sans, sans-serif" letter-spacing="0" font-style="italic" stroke="#ffffff" stroke-opacity="0.75" stroke-width="2.2" paint-order="stroke" stroke-linejoin="round">Nevada</text>
<text x="569.2" y="284.8" font-size="11.8" fill="#875a8c" text-anchor="middle" font-family="DejaVu Sans Condensed, DejaVu Sans, sans-serif" letter-spacing="0" font-style="italic" stroke="#ffffff" stroke-opacity="0.75" stroke-width="2.2" paint-order="stroke" stroke-linejoin="round">Utah</text>
<text x="706.7" y="303.5" font-size="11.8" fill="#875a8c" text-anchor="start" font-family="DejaVu Sans Condensed, DejaVu Sans, sans-serif" letter-spacing="0" font-style="italic" stroke="#ffffff" stroke-opacity="0.75" stroke-width="2.2" paint-order="stroke" stroke-linejoin="round">Co</text>
<text x="560.0" y="217.5" font-size="13.2" fill="#3d3d3d" text-anchor="middle" font-family="DejaVu Sans Condensed, DejaVu Sans, sans-serif" letter-spacing="0" stroke="#ffffff" stroke-opacity="0.75" stroke-width="2.2" paint-order="stroke" stroke-linejoin="round">Salt Lake</text>
<text x="560.0" y="233.5" font-size="13.2" fill="#3d3d3d" text-anchor="middle" font-family="DejaVu Sans Condensed, DejaVu Sans, sans-serif" letter-spacing="0" stroke="#ffffff" stroke-opacity="0.75" stroke-width="2.2" paint-order="stroke" stroke-linejoin="round">City</text>
<circle cx="560.0" cy="237.5" r="1.7" fill="#f6f6f6" stroke="#7a7a7a" stroke-width="0.7"/>
<text x="472.0" y="410.5" font-size="13.2" fill="#3d3d3d" text-anchor="middle" font-family="DejaVu Sans Condensed, DejaVu Sans, sans-serif" letter-spacing="0" stroke="#ffffff" stroke-opacity="0.75" stroke-width="2.2" paint-order="stroke" stroke-linejoin="round">Las Vegas</text>
<circle cx="472.0" cy="394.5" r="1.7" fill="#f6f6f6" stroke="#7a7a7a" stroke-width="0.7"/>
<text x="566.8" y="463.8" font-size="11.8" fill="#875a8c" text-anchor="middle" font-family="DejaVu Sans Condensed, DejaVu Sans, sans-serif" letter-spacing="0" font-style="italic" stroke="#ffffff" stroke-opacity="0.75" stroke-width="2.2" paint-order="stroke" stroke-linejoin="round">Arizona</text>
<text x="685.7" y="463.8" font-size="11.8" fill="#875a8c" text-anchor="start" font-family="DejaVu Sans Condensed, DejaVu Sans, sans-serif" letter-spacing="0" font-style="italic" stroke="#ffffff" stroke-opacity="0.75" stroke-width="2.2" paint-order="stroke" stroke-linejoin="round">New M</text>
<text x="661.0" y="427.1" font-size="13.2" fill="#3d3d3d" text-anchor="start" font-family="DejaVu Sans Condensed, DejaVu Sans, sans-serif" letter-spacing="0" stroke="#ffffff" stroke-opacity="0.75" stroke-width="2.2" paint-order="stroke" stroke-linejoin="round">Albuquerque</text>
<circle cx="700.0" cy="430.0" r="1.7" fill="#f6f6f6" stroke="#7a7a7a" stroke-width="0.7"/>
<text x="555.0" y="498.5" font-size="13.2" fill="#3d3d3d" text-anchor="middle" font-family="DejaVu Sans Condensed, DejaVu Sans, sans-serif" letter-spacing="0" stroke="#ffffff" stroke-opacity="0.75" stroke-width="2.2" paint-order="stroke" stroke-linejoin="round">Phoenix</text>
<circle cx="555.0" cy="484.5" r="1.7" fill="#f6f6f6" stroke="#7a7a7a" stroke-width="0.7"/>
<text x="584.3" y="519.1" font-size="13.2" fill="#3d3d3d" text-anchor="middle" font-family="DejaVu Sans Condensed, DejaVu Sans, sans-serif" letter-spacing="0" stroke="#ffffff" stroke-opacity="0.75" stroke-width="2.2" paint-order="stroke" stroke-linejoin="round">Tucson</text>
<circle cx="584.0" cy="523.5" r="1.7" fill="#f6f6f6" stroke="#7a7a7a" stroke-width="0.7"/>
<text x="494.0" y="516.1" font-size="13.2" fill="#3d3d3d" text-anchor="middle" font-family="DejaVu Sans Condensed, DejaVu Sans, sans-serif" letter-spacing="0" stroke="#ffffff" stroke-opacity="0.75" stroke-width="2.2" paint-order="stroke" stroke-linejoin="round">Mexicali</text>
<text x="423.9" y="509.5" font-size="13.2" fill="#3d3d3d" text-anchor="middle" font-family="DejaVu Sans Condensed, DejaVu Sans, sans-serif" letter-spacing="0" stroke="#ffffff" stroke-opacity="0.75" stroke-width="2.2" paint-order="stroke" stroke-linejoin="round">Tijuana</text>
<circle cx="423.0" cy="514.0" r="1.7" fill="#f6f6f6" stroke="#7a7a7a" stroke-width="0.7"/>
<text x="389.2" y="479.3" font-size="13.2" fill="#3d3d3d" text-anchor="middle" font-family="DejaVu Sans Condensed, DejaVu Sans, sans-serif" letter-spacing="0" stroke="#ffffff" stroke-opacity="0.75" stroke-width="2.2" paint-order="stroke" stroke-linejoin="round">Los Angeles</text>
<text x="664.3" y="555.8" font-size="13.2" fill="#3d3d3d" text-anchor="start" font-family="DejaVu Sans Condensed, DejaVu Sans, sans-serif" letter-spacing="0" stroke="#ffffff" stroke-opacity="0.75" stroke-width="2.2" paint-order="stroke" stroke-linejoin="round">Ciudad Juárez</text>
<circle cx="706.0" cy="538.5" r="1.7" fill="#f6f6f6" stroke="#7a7a7a" stroke-width="0.7"/>
<text x="469.7" y="586.7" font-size="11.8" fill="#875a8c" text-anchor="middle" font-family="DejaVu Sans Condensed, DejaVu Sans, sans-serif" letter-spacing="0" font-style="italic" stroke="#ffffff" stroke-opacity="0.75" stroke-width="2.2" paint-order="stroke" stroke-linejoin="round">Baja California</text>
<g fill="#8b4a24" stroke="#2a1a10" stroke-width="0.9"><circle cx="287.3" cy="181.3" r="2.100"/><circle cx="234.0" cy="192.7" r="2.100"/><circle cx="181.3" cy="218.0" r="2.100"/><circle cx="193.7" cy="228.7" r="2.100"/><circle cx="220.7" cy="228.7" r="2.100"/><circle cx="227.3" cy="224.3" r="2.100"/><circle cx="220.7" cy="235.7" r="2.100"/><circle cx="225.7" cy="237.7" r="2.100"/><circle cx="229.3" cy="237.3" r="2.100"/><circle cx="215.3" cy="241.0" r="2.100"/><circle cx="200.7" cy="246.3" r="2.100"/><circle cx="189.0" cy="249.7" r="2.100"/><circle cx="225.3" cy="250.7" r="2.100"/><circle cx="229.3" cy="249.7" r="2.100"/><circle cx="224.3" cy="255.7" r="2.100"/><circle cx="287.3" cy="264.0" r="2.100"/><circle cx="300.3" cy="283.3" r="2.100"/><circle cx="343.0" cy="280.3" r="2.100"/><circle cx="381.3" cy="277.7" r="2.100"/><circle cx="381.3" cy="285.0" r="2.100"/><circle cx="389.7" cy="288.0" r="2.100"/><circle cx="408.3" cy="246.3" r="2.100"/><circle cx="400.3" cy="309.0" r="2.100"/><circle cx="234.0" cy="298.3" r="2.100"/><circle cx="269.0" cy="316.7" r="2.100"/><circle cx="274.3" cy="315.7" r="2.100"/><circle cx="276.3" cy="320.0" r="2.100"/><circle cx="290.3" cy="315.7" r="2.100"/><circle cx="279.3" cy="325.3" r="2.100"/><circle cx="276.7" cy="326.3" r="2.100"/><circle cx="287.7" cy="333.0" r="2.100"/><circle cx="292.7" cy="338.0" r="2.100"/><circle cx="276.7" cy="340.0" r="2.100"/><circle cx="282.0" cy="340.0" r="2.100"/><circle cx="274.7" cy="343.7" r="2.100"/><circle cx="285.3" cy="343.7" r="2.100"/><circle cx="277.0" cy="346.7" r="2.100"/><circle cx="279.7" cy="350.0" r="2.100"/><circle cx="287.7" cy="350.0" r="2.100"/><circle cx="293.7" cy="352.3" r="2.100"/><circle cx="296.0" cy="355.7" r="2.100"/><circle cx="290.3" cy="360.0" r="2.100"/><circle cx="291.0" cy="365.3" r="2.100"/><circle cx="372.3" cy="346.3" r="2.100"/><circle cx="383.0" cy="348.7" r="2.100"/><circle cx="392.3" cy="376.7" r="2.100"/><circle cx="440.7" cy="376.7" r="2.100"/><circle cx="583.3" cy="165.0" r="2.100"/><circle cx="541.3" cy="190.3" r="2.100"/><circle cx="561.3" cy="200.0" r="2.100"/><circle cx="479.0" cy="223.0" r="2.100"/><circle cx="576.7" cy="282.3" r="2.100"/><circle cx="676.7" cy="300.3" r="2.100"/><circle cx="332.7" cy="393.0" r="2.100"/><circle cx="327.7" cy="400.0" r="2.100"/><circle cx="331.3" cy="406.3" r="2.100"/><circle cx="311.7" cy="409.7" r="2.100"/><circle cx="314.3" cy="416.7" r="2.100"/><circle cx="370.3" cy="422.0" r="2.100"/><circle cx="368.0" cy="433.0" r="2.100"/><circle cx="320.3" cy="439.3" r="2.100"/><circle cx="327.7" cy="449.3" r="2.100"/><circle cx="336.3" cy="451.7" r="2.100"/><circle cx="344.0" cy="459.3" r="2.100"/><circle cx="349.3" cy="452.0" r="2.100"/><circle cx="349.3" cy="454.3" r="2.100"/><circle cx="368.0" cy="462.3" r="2.100"/><circle cx="377.7" cy="464.7" r="2.100"/><circle cx="380.3" cy="458.3" r="2.100"/><circle cx="384.3" cy="452.0" r="2.100"/><circle cx="383.3" cy="458.3" r="2.100"/><circle cx="384.7" cy="463.7" r="2.100"/><circle cx="392.0" cy="462.3" r="2.100"/><circle cx="395.0" cy="457.3" r="2.100"/><circle cx="395.3" cy="465.3" r="2.100"/><circle cx="404.3" cy="453.7" r="2.100"/><circle cx="402.7" cy="461.0" r="2.100"/><circle cx="401.3" cy="467.3" r="2.100"/><circle cx="399.3" cy="470.0" r="2.100"/><circle cx="413.7" cy="462.3" r="2.100"/><circle cx="426.0" cy="455.7" r="2.100"/><circle cx="426.0" cy="459.0" r="2.100"/><circle cx="432.7" cy="433.0" r="2.100"/><circle cx="441.3" cy="446.3" r="2.100"/><circle cx="437.0" cy="459.0" r="2.100"/><circle cx="432.3" cy="465.3" r="2.100"/><circle cx="440.3" cy="467.0" r="2.100"/><circle cx="389.0" cy="472.3" r="2.100"/><circle cx="421.3" cy="474.7" r="2.100"/><circle cx="396.0" cy="478.0" r="2.100"/><circle cx="389.3" cy="481.7" r="2.100"/><circle cx="422.0" cy="481.7" r="2.100"/><circle cx="398.3" cy="498.3" r="2.100"/><circle cx="454.7" cy="495.0" r="2.100"/><circle cx="458.0" cy="493.3" r="2.100"/><circle cx="416.3" cy="507.3" r="2.100"/><circle cx="450.7" cy="507.3" r="2.100"/><circle cx="462.0" cy="504.0" r="2.100"/><circle cx="462.0" cy="506.0" r="2.100"/><circle cx="462.0" cy="513.3" r="2.100"/><circle cx="466.3" cy="509.0" r="2.100"/><circle cx="466.3" cy="515.0" r="2.100"/><circle cx="468.0" cy="520.3" r="2.100"/><circle cx="462.0" cy="535.7" r="2.100"/><circle cx="435.3" cy="545.0" r="2.100"/><circle cx="466.7" cy="509.0" r="2.100"/><circle cx="467.3" cy="515.0" r="2.100"/><circle cx="471.0" cy="515.7" r="2.100"/><circle cx="468.0" cy="520.3" r="2.100"/><circle cx="476.0" cy="522.3" r="2.100"/><circle cx="636.3" cy="561.0" r="2.100"/></g>
</g>
<g clip-path="url(#ic)">
<rect x="87" y="417" width="218" height="185" fill="#aad3df"/>
<path d="M99.7 414.6 L97.7 424.2 L95.6 432.5 L92.2 443.4 L88.1 453.0 L87.6 455.8 L95.6 451.0 L103.8 450.3 L112.1 453.0 L118.9 459.9 L124.4 465.4 L129.9 470.2 L133.3 473.6 L138.8 470.9 L143.6 475.0 L150.5 480.5 L157.3 485.3 L160.8 488.0 L168.3 491.4 L167.9 497.9 L162.3 509.0 L163.7 522.7 L163.0 532.3 L165.1 543.3 L171.9 551.5 L175.4 559.8 L177.4 570.7 L178.8 585.8 L179.5 605.0 L306.0 604.0 L306.0 415.0Z" fill="#f1eee6"/>
<path d="M99.7 414.6 L97.7 424.2 L95.6 432.5 L92.2 443.4 L88.1 453.0 L87.6 455.8 L95.6 451.0 L103.8 450.3 L106.6 443.4 L109.3 436.6 L106.6 428.3 L103.1 420.1Z" fill="#e3efd2"/>
<path d="M102.2 418.7 L107.9 429.7 L113.4 436.6 L118.9 442.1" fill="none" stroke="#aad3df" stroke-width="1.200"/>
<path d="M190.5 457.2 L216.6 455.8 L227.6 461.3 L241.3 464.0 L255.0 461.3 L272.8 461.3 L285.2 473.6 L292.0 487.3 L289.3 498.3 L278.3 505.2 L257.7 512.0 L241.3 512.0 L237.2 492.8 L228.9 476.4 L212.5 476.4 L190.5 481.8Z" fill="#dfecd2" opacity="0.85" filter="url(#bl1)"/>
<path d="M223.4 417.4 L255.0 416.7 L257.7 427.0 L260.5 436.6 L272.8 443.4 L267.3 448.2 L250.9 446.2 L237.2 446.2 L226.2 448.2 L219.3 444.1 L226.9 432.5 L224.1 424.2Z" fill="#d5ebc8"/>
<path d="M167.8 432.5 L173.3 429.0 L180.2 427.7 L185.7 429.0 L191.2 431.1 L196.6 436.6 L200.8 440.7 L204.9 444.1 L210.4 445.5 L215.8 448.2 L221.3 446.2 L226.8 433.8 L232.3 429.7 L243.3 428.3 L251.5 431.1 L255.6 439.3 L259.7 443.4 L268.0 445.5 L273.5 448.9 L266.6 450.3 L257.0 448.9 L246.0 446.9 L237.8 445.5 L232.3 447.6 L226.8 449.6 L221.3 450.6 L214.5 450.3 L209.0 448.6 L203.5 447.3 L198.0 448.9 L191.2 453.0 L187.0 455.8 L184.3 461.3 L184.3 463.3 L188.4 470.9 L192.5 476.4 L195.3 484.6 L198.0 488.7 L204.9 494.2 L209.0 501.0 L211.7 510.0 L213.1 515.9 L218.6 521.3 L224.1 526.8 L226.8 533.7 L232.3 540.6 L237.8 544.7 L243.3 548.8 L248.1 552.9 L248.8 558.4 L243.3 562.5 L232.3 563.9 L224.1 559.8 L220.0 552.9 L215.8 550.2 L210.4 548.8 L204.9 546.0 L200.8 540.6 L197.3 535.7 L191.2 533.7 L185.7 529.6 L181.6 524.1 L179.5 517.2 L178.1 509.0 L179.5 501.0 L179.5 493.5 L176.1 491.2 L172.6 491.4 L170.6 487.3 L167.8 480.5 L165.1 473.6 L163.7 464.0 L166.5 462.0 L167.8 457.2 L165.8 450.3 L165.1 440.7Z" fill="#aad3df"/>
<path d="M179.5 493.5 L176.1 490.8 L169.2 490.1 L165.1 492.8 L166.5 498.3 L171.9 496.2 L177.4 495.6Z" fill="#aad3df"/>
<path d="M221.3 548.8 L232.3 546.0 L244.7 550.2 L248.1 555.6 L244.7 561.8 L232.3 563.2 L224.1 558.4Z" fill="#b9dbe4"/>
<path d="M280.3 424.2 L306.0 421.5 L306.0 461.3 L295.4 457.2 L284.4 451.7 L277.6 442.1Z" fill="#d6ebe6" opacity="0.8"/>
<path d="M281.0 433.8 L286.5 429.7 L292.0 435.2 L297.5 432.5 L304.4 437.9 L300.3 444.8 L294.8 442.1 L290.7 448.9 L285.2 444.8 L279.7 450.3 L276.9 443.4" fill="none" stroke="#b5dbe6" stroke-width="2.200" stroke-linejoin="round"/>
<path d="M292.0 450.3 L297.5 454.4 L304.4 453.0 L300.3 461.3 L305.7 465.4" fill="none" stroke="#b5dbe6" stroke-width="1.800" stroke-linejoin="round"/>
<path d="M184.3 418.7 L195.3 420.1 L198.0 427.0 L191.2 429.7 L184.3 427.0Z" fill="#bfdde2" opacity="0.8"/>
<g fill="#6fb2ea"><rect x="237.8" y="422.9" width="5" height="0.900"/><rect x="244.7" y="420.1" width="5" height="0.900"/><rect x="248.8" y="427.0" width="5" height="0.900"/><rect x="239.2" y="430.4" width="4" height="0.900"/><rect x="246.0" y="433.8" width="5" height="0.900"/><rect x="251.5" y="436.6" width="4" height="0.900"/><rect x="244.7" y="438.6" width="5" height="0.900"/><rect x="250.1" y="444.1" width="5" height="0.900"/><rect x="265.2" y="445.1" width="4" height="0.900"/><rect x="229.6" y="426.3" width="4" height="0.900"/><rect x="185.7" y="424.2" width="3" height="0.900"/><rect x="191.2" y="421.5" width="3" height="0.900"/><rect x="287.2" y="432.5" width="3" height="0.900"/><rect x="294.0" y="443.4" width="3" height="0.900"/><rect x="298.1" y="451.7" width="3" height="0.900"/></g>
<g filter="url(#bl)"><ellipse cx="260.0" cy="487.0" rx="26" ry="17" transform="rotate(25 260.0 487.0)" fill="#cfe6bd" opacity="0.7"/><ellipse cx="209.0" cy="465.0" rx="18" ry="7" transform="rotate(10 209.0 465.0)" fill="#cfe6bd" opacity="0.6"/><ellipse cx="205.0" cy="578.0" rx="22" ry="20" transform="rotate(-30 205.0 578.0)" fill="#cfe6bd" opacity="0.65"/><ellipse cx="284.0" cy="578.0" rx="16" ry="22" transform="rotate(-15 284.0 578.0)" fill="#cfe6bd" opacity="0.7"/><ellipse cx="240.0" cy="560.0" rx="8" ry="10" transform="rotate(0 240.0 560.0)" fill="#cfe6bd" opacity="0.3"/><ellipse cx="186.0" cy="548.0" rx="5" ry="10" transform="rotate(-10 186.0 548.0)" fill="#cfe6bd" opacity="0.45"/><ellipse cx="232.0" cy="470.0" rx="10" ry="14" transform="rotate(-30 232.0 470.0)" fill="#cfe6bd" opacity="0.4"/><ellipse cx="296.0" cy="540.0" rx="8" ry="14" transform="rotate(0 296.0 540.0)" fill="#cfe6bd" opacity="0.4"/><ellipse cx="150.0" cy="440.0" rx="8" ry="5" transform="rotate(0 150.0 440.0)" fill="#cfe6bd" opacity="0.35"/><ellipse cx="140.0" cy="462.0" rx="4" ry="3" transform="rotate(0 140.0 462.0)" fill="#cfe6bd" opacity="0.4"/><ellipse cx="288.0" cy="440.0" rx="10" ry="12" transform="rotate(0 288.0 440.0)" fill="#d9ebe0" opacity="0.3"/><ellipse cx="180.0" cy="585.0" rx="8" ry="14" transform="rotate(0 180.0 585.0)" fill="#cfe6bd" opacity="0.4"/></g>
<g filter="url(#bl1)"><path d="M179.5 529.6L226.8 566.6" stroke="#d9d8d6" stroke-width="7" stroke-linecap="round" opacity="0.75"/><path d="M232.3 568.0L262.5 594.0" stroke="#d9d8d6" stroke-width="16" stroke-linecap="round" opacity="0.8"/><path d="M195.3 476.4L226.8 529.6" stroke="#d9d8d6" stroke-width="6" stroke-linecap="round" opacity="0.75"/><path d="M226.8 529.6L251.5 563.9" stroke="#d9d8d6" stroke-width="6" stroke-linecap="round" opacity="0.75"/><path d="M176.1 498.3L170.6 520.0" stroke="#d9d8d6" stroke-width="9" stroke-linecap="round" opacity="0.7"/><path d="M221.3 455.8L246.0 461.3" stroke="#d9d8d6" stroke-width="7" stroke-linecap="round" opacity="0.6"/><path d="M268.0 457.2L278.9 461.3" stroke="#d9d8d6" stroke-width="6" stroke-linecap="round" opacity="0.5"/><path d="M226.8 461.3L232.3 473.6" stroke="#d9d8d6" stroke-width="5" stroke-linecap="round" opacity="0.5"/></g>
<path d="M86.0 510.2 L102.4 507.4 L114.7 497.9 L124.2 485.6 L133.8 474.7 L144.7 477.4 L146.6 497.9 L145.5 525.2 L167.9 532.0" fill="none" stroke="#8fc7a4" stroke-width="0.900"/>
<path d="M144.7 477.4 L157.0 488.3 L167.9 495.1" fill="none" stroke="#8fc7a4" stroke-width="0.900"/>
<path d="M86.0 549.7 L99.6 547.0 L113.3 540.2 L122.8 530.6" fill="none" stroke="#9b8fc0" stroke-width="1.600" opacity="0.8"/>
<path d="M122.8 530.6 L126.9 552.5 L136.5 568.8 L140.6 585.2 L141.4 604.3" fill="none" stroke="#a78ec7" stroke-width="1.400" opacity="0.9"/>
<path d="M86.0 462.4 L96.9 461.0 L110.6 465.1 L124.2 474.7 L137.9 487.0 L151.5 497.9 L159.7 508.8 L161.1 525.2 L157.5 538.8 L161.1 555.2 L167.9 568.8 L169.2 585.2 L167.9 604.3" fill="none" stroke="#b9a2d6" stroke-width="0.800" stroke-dasharray="3 2" opacity="0.8"/>
<path d="M86.0 497.9 L92.8 500.6 L98.3 507.4 L98.3 515.6 L92.8 522.4 L86.0 524.6" fill="none" stroke="#b9a2d6" stroke-width="0.800" stroke-dasharray="3 2" opacity="0.8"/>
<path d="M195.2 446.0 L184.3 456.9 L176.1 470.6 L173.3 484.2 L180.2 497.9 L184.3 508.8 L195.2 519.7" fill="none" stroke="#8fb6e6" stroke-width="0.700" stroke-dasharray="3 2" opacity="0.8"/>
<path d="M121.5 443.3 L129.7 451.5 L140.6 452.8 L150.1 462.4 L157.0 470.6 L163.8 474.7" fill="none" stroke="#f4b183" stroke-width="0.8" stroke-linejoin="round" stroke-linecap="round"/><path d="M150.1 462.4 L154.2 456.9 L159.7 455.6" fill="none" stroke="#f4b183" stroke-width="0.7" stroke-linejoin="round" stroke-linecap="round"/><path d="M167.9 519.7 L165.1 530.6 L163.8 541.5 L167.9 552.5 L173.3 560.7 L178.8 568.8" fill="none" stroke="#f4b183" stroke-width="0.9" stroke-linejoin="round" stroke-linecap="round"/><path d="M167.9 552.5 L176.1 551.1 L184.3 549.7" fill="none" stroke="#f4b183" stroke-width="0.8" stroke-linejoin="round" stroke-linecap="round"/><path d="M219.7 416.0 L227.9 426.9 L238.8 432.4 L249.8 426.9 L260.7 421.5" fill="none" stroke="#f4b183" stroke-width="0.8" stroke-linejoin="round" stroke-linecap="round"/><path d="M288.0 416.0 L285.2 426.9 L277.0 435.1 L282.5 446.0 L288.0 456.9" fill="none" stroke="#f4b183" stroke-width="0.8" stroke-linejoin="round" stroke-linecap="round"/><path d="M306.0 432.4 L296.2 437.8 L288.0 456.9" fill="none" stroke="#f4b183" stroke-width="0.8" stroke-linejoin="round" stroke-linecap="round"/><path d="M230.7 473.3 L234.7 465.1 L238.8 456.9 L249.8 454.2 L260.7 451.5" fill="none" stroke="#f4b183" stroke-width="0.8" stroke-linejoin="round" stroke-linecap="round"/><path d="M238.8 489.7 L249.8 484.2 L260.7 481.5 L266.1 470.6" fill="none" stroke="#f4b183" stroke-width="0.7" stroke-linejoin="round" stroke-linecap="round"/><path d="M255.2 519.7 L271.6 522.4 L282.5 514.3 L288.0 497.9 L289.3 481.5" fill="none" stroke="#f4b183" stroke-width="0.8" stroke-linejoin="round" stroke-linecap="round"/><path d="M289.3 481.5 L301.6 484.2 L306.0 485.6" fill="none" stroke="#f4b183" stroke-width="0.8" stroke-linejoin="round" stroke-linecap="round"/><path d="M203.4 557.9 L211.5 563.4 L222.5 568.8 L233.4 568.8 L244.3 577.0" fill="none" stroke="#f4b183" stroke-width="0.8" stroke-linejoin="round" stroke-linecap="round"/><path d="M222.5 577.0 L233.4 590.7 L238.8 603.0" fill="none" stroke="#f4b183" stroke-width="0.8" stroke-linejoin="round" stroke-linecap="round"/><path d="M249.8 557.9 L260.7 557.9 L266.1 568.8 L277.0 579.8 L288.0 590.7 L298.9 603.0" fill="none" stroke="#f4b183" stroke-width="0.8" stroke-linejoin="round" stroke-linecap="round"/><path d="M238.8 579.8 L244.3 568.8 L255.2 568.8" fill="none" stroke="#f4b183" stroke-width="0.7" stroke-linejoin="round" stroke-linecap="round"/><path d="M249.8 586.6 L260.7 582.5 L271.6 585.2 L282.5 596.1" fill="none" stroke="#f4b183" stroke-width="0.8" stroke-linejoin="round" stroke-linecap="round"/><path d="M227.9 572.9 L233.4 582.5 L247.0 590.7 L260.7 596.1 L274.3 603.0" fill="none" stroke="#f4b183" stroke-width="0.8" stroke-linejoin="round" stroke-linecap="round"/><path d="M277.0 506.1 L282.5 525.2 L277.0 538.8 L271.6 547.0" fill="none" stroke="#f4b183" stroke-width="0.7" stroke-linejoin="round" stroke-linecap="round"/><path d="M150.1 416.0 L155.6 426.9 L159.7 440.6 L163.8 454.2 L165.1 467.9 L167.9 481.5 L170.6 495.1 L173.9 498.4 L177.4 506.1 L176.1 517.0 L173.3 525.2 L180.2 533.4 L188.3 541.5 L195.2 549.7 L203.4 557.9 L214.3 566.1 L227.9 572.9 L238.8 579.8 L249.8 586.6 L263.4 593.4 L277.0 603.0" fill="none" stroke="#e47a90" stroke-width="1.1" stroke-linejoin="round" stroke-linecap="round"/><path d="M173.3 525.2 L176.1 538.8 L184.3 549.7 L195.2 557.9 L208.8 568.8 L222.5 577.0 L236.1 582.5 L249.8 586.6" fill="none" stroke="#e47a90" stroke-width="1.0" stroke-linejoin="round" stroke-linecap="round"/><path d="M206.1 416.0 L206.1 426.9 L203.4 437.8 L197.9 446.0 L191.1 454.2 L189.7 465.1 L192.4 476.0 L195.2 487.0 L187.0 492.4 L180.2 493.8 L177.4 497.9" fill="none" stroke="#e47a90" stroke-width="1.1" stroke-linejoin="round" stroke-linecap="round"/><path d="M195.2 487.0 L206.1 497.9 L217.0 506.1 L225.2 514.3 L233.4 525.2 L241.6 536.1 L247.0 547.0 L249.8 557.9 L255.2 568.8 L260.7 579.8 L266.1 590.7 L274.3 603.0" fill="none" stroke="#e47a90" stroke-width="1.1" stroke-linejoin="round" stroke-linecap="round"/><path d="M195.2 487.0 L208.8 481.5 L222.5 474.7 L230.7 473.3" fill="none" stroke="#e47a90" stroke-width="1.0" stroke-linejoin="round" stroke-linecap="round"/><path d="M222.5 510.2 L238.8 511.5 L260.7 510.2 L282.5 507.4 L306.0 502.8" fill="none" stroke="#e47a90" stroke-width="1.0" stroke-linejoin="round" stroke-linecap="round"/><path d="M222.5 416.0 L219.7 429.6 L221.1 446.0 L227.9 459.7 L230.7 473.3 L238.8 489.7 L247.0 506.1 L255.2 519.7 L257.9 533.4 L252.5 544.3 L255.2 557.9 L260.7 568.8" fill="none" stroke="#e47a90" stroke-width="1.0" stroke-linejoin="round" stroke-linecap="round"/><path d="M197.9 446.0 L208.8 451.5 L222.5 451.5 L238.8 448.8 L255.2 450.1 L271.6 454.2 L288.0 456.9 L306.0 456.9" fill="none" stroke="#e47a90" stroke-width="1.0" stroke-linejoin="round" stroke-linecap="round"/><path d="M188.3 541.5 L200.6 533.4 L214.3 525.2 L225.2 515.6" fill="none" stroke="#e47a90" stroke-width="1.0" stroke-linejoin="round" stroke-linecap="round"/><path d="M214.3 566.1 L225.2 557.9 L236.1 552.5 L246.5 547.8" fill="none" stroke="#e47a90" stroke-width="1.0" stroke-linejoin="round" stroke-linecap="round"/><path d="M163.8 454.2 L176.1 443.3 L189.7 440.6 L203.4 437.8" fill="none" stroke="#e47a90" stroke-width="1.0" stroke-linejoin="round" stroke-linecap="round"/><path d="M206.1 426.9 L217.0 432.4 L221.1 446.0" fill="none" stroke="#e47a90" stroke-width="1.0" stroke-linejoin="round" stroke-linecap="round"/><path d="M249.8 586.6 L245.7 596.1 L241.6 604.3" fill="none" stroke="#e47a90" stroke-width="1.0" stroke-linejoin="round" stroke-linecap="round"/><path d="M236.1 582.5 L249.8 579.8 L263.4 583.0 L274.3 593.4 L282.5 603.0" fill="none" stroke="#e47a90" stroke-width="1.0" stroke-linejoin="round" stroke-linecap="round"/><path d="M177.4 506.1 L181.5 511.5 L180.2 525.2 L184.3 536.1 L188.3 541.5" fill="none" stroke="#e47a90" stroke-width="0.9" stroke-linejoin="round" stroke-linecap="round"/><path d="M165.1 467.9 L173.3 470.6 L184.3 470.6 L189.7 465.1" fill="none" stroke="#e47a90" stroke-width="0.9" stroke-linejoin="round" stroke-linecap="round"/><path d="M206.1 497.9 L214.3 495.1 L222.5 497.9 L238.8 489.7" fill="none" stroke="#e47a90" stroke-width="0.8" stroke-linejoin="round" stroke-linecap="round"/><path d="M159.7 440.6 L154.2 446.0 L155.6 459.7 L159.7 470.6 L165.1 467.9" fill="none" stroke="#e47a90" stroke-width="0.8" stroke-linejoin="round" stroke-linecap="round"/><path d="M187.0 474.7 L185.6 459.7 L191.1 452.8 L200.6 449.3 L214.3 450.9 L227.9 446.6 L244.3 447.7 L260.7 450.4 L277.0 456.9 L288.0 470.6 L290.7 492.4 L289.3 503.3 L277.0 507.4" fill="none" stroke="#8c8c8c" stroke-width="1.0" stroke-linejoin="round" stroke-linecap="round"/><path d="M249.8 448.8 L271.6 456.4 L285.2 462.9 L306.0 470.6" fill="none" stroke="#8c8c8c" stroke-width="0.9" stroke-linejoin="round" stroke-linecap="round"/><path d="M277.0 456.9 L293.4 462.4 L306.0 463.8" fill="none" stroke="#8c8c8c" stroke-width="0.8" stroke-linejoin="round" stroke-linecap="round"/><path d="M211.5 451.5 L217.0 443.3 L214.3 432.4 L217.0 416.0" fill="none" stroke="#8c8c8c" stroke-width="0.8" stroke-linejoin="round" stroke-linecap="round"/><path d="M197.9 489.7 L208.8 500.6 L219.7 511.5 L230.7 525.2 L241.6 538.8 L249.8 552.5 L256.6 568.8 L266.1 585.2 L277.0 598.9" fill="none" stroke="#8c8c8c" stroke-width="0.9" stroke-linejoin="round" stroke-linecap="round"/><path d="M238.8 497.9 L249.8 514.3 L257.9 530.6 L255.2 536.1 L247.0 534.7" fill="none" stroke="#8c8c8c" stroke-width="0.9" stroke-linejoin="round" stroke-linecap="round"/><path d="M180.2 532.0 L189.7 540.2 L200.6 549.7 L214.3 563.4 L230.7 574.3 L247.0 585.2 L260.7 593.4" fill="none" stroke="#8c8c8c" stroke-width="0.9" stroke-linejoin="round" stroke-linecap="round"/><path d="M293.4 416.0 L296.2 432.4 L294.8 440.6" fill="none" stroke="#8c8c8c" stroke-width="0.8" stroke-linejoin="round" stroke-linecap="round"/><path d="M289.3 503.3 L296.2 508.8 L306.0 506.1" fill="none" stroke="#8c8c8c" stroke-width="0.8" stroke-linejoin="round" stroke-linecap="round"/><path d="M177.4 497.9 L180.2 508.8 L180.2 525.2" fill="none" stroke="#8c8c8c" stroke-width="0.8" stroke-linejoin="round" stroke-linecap="round"/>
<text x="200.6" y="439.7" font-size="8.4" fill="#3d3d3d" text-anchor="middle" font-family="DejaVu Sans Condensed, DejaVu Sans, sans-serif" letter-spacing="0" stroke="#ffffff" stroke-opacity="0.75" stroke-width="2.2" paint-order="stroke" stroke-linejoin="round">Vallejo</text>
<text x="233.7" y="462.7" font-size="8.4" fill="#3d3d3d" text-anchor="middle" font-family="DejaVu Sans Condensed, DejaVu Sans, sans-serif" letter-spacing="0" stroke="#ffffff" stroke-opacity="0.75" stroke-width="2.2" paint-order="stroke" stroke-linejoin="round">Concord</text>
<text x="187.3" y="470.6" font-size="8.4" fill="#3d3d3d" text-anchor="middle" font-family="DejaVu Sans Condensed, DejaVu Sans, sans-serif" letter-spacing="0" stroke="#ffffff" stroke-opacity="0.75" stroke-width="2.2" paint-order="stroke" stroke-linejoin="round">Richmond</text>
<text x="198.7" y="483.1" font-size="8.4" fill="#3d3d3d" text-anchor="middle" font-family="DejaVu Sans Condensed, DejaVu Sans, sans-serif" letter-spacing="0" stroke="#ffffff" stroke-opacity="0.75" stroke-width="2.2" paint-order="stroke" stroke-linejoin="round">Berkeley</text>
<text x="176.9" y="501.1" font-size="10.7" fill="#3d3d3d" text-anchor="middle" font-family="DejaVu Sans Condensed, DejaVu Sans, sans-serif" letter-spacing="0" stroke="#ffffff" stroke-opacity="0.75" stroke-width="2.2" paint-order="stroke" stroke-linejoin="round">San Francisco</text>
<text x="227.1" y="521.1" font-size="8.4" fill="#3d3d3d" text-anchor="middle" font-family="DejaVu Sans Condensed, DejaVu Sans, sans-serif" letter-spacing="0" stroke="#ffffff" stroke-opacity="0.75" stroke-width="2.2" paint-order="stroke" stroke-linejoin="round">Hayward</text>
<text x="193.3" y="544.5" font-size="8.4" fill="#3d3d3d" text-anchor="middle" font-family="DejaVu Sans Condensed, DejaVu Sans, sans-serif" letter-spacing="0" stroke="#ffffff" stroke-opacity="0.75" stroke-width="2.2" paint-order="stroke" stroke-linejoin="round">San Mateo</text>
<text x="240.7" y="543.4" font-size="8.4" fill="#3d3d3d" text-anchor="middle" font-family="DejaVu Sans Condensed, DejaVu Sans, sans-serif" letter-spacing="0" stroke="#ffffff" stroke-opacity="0.75" stroke-width="2.2" paint-order="stroke" stroke-linejoin="round">Fremont</text>
<text x="215.4" y="562.5" font-size="8.4" fill="#3d3d3d" text-anchor="middle" font-family="DejaVu Sans Condensed, DejaVu Sans, sans-serif" letter-spacing="0" stroke="#ffffff" stroke-opacity="0.75" stroke-width="2.2" paint-order="stroke" stroke-linejoin="round">Palo Alto</text>
<text x="254.9" y="584.6" font-size="10.7" fill="#3d3d3d" text-anchor="middle" font-family="DejaVu Sans Condensed, DejaVu Sans, sans-serif" letter-spacing="0" stroke="#ffffff" stroke-opacity="0.75" stroke-width="2.2" paint-order="stroke" stroke-linejoin="round">San Jose</text>
<text x="85.500" y="425" font-size="9" font-style="italic" fill="#3aa04a" font-family="DejaVu Sans Condensed, sans-serif">ne</text><text x="83" y="436.500" font-size="9" font-style="italic" fill="#3aa04a" font-family="DejaVu Sans Condensed, sans-serif">uary</text>
<g fill="#0000c0" stroke="#00005a" stroke-width="0.700"><circle cx="179.6" cy="416.8" r="2.100"/><circle cx="238.8" cy="454.8" r="2.100"/><circle cx="266.1" cy="482.0" r="2.100"/><circle cx="210.2" cy="491.6" r="2.100"/><circle cx="179.6" cy="492.4" r="2.100"/><circle cx="176.9" cy="495.7" r="2.100"/><circle cx="223.8" cy="511.3" r="2.100"/><circle cx="167.3" cy="516.7" r="2.100"/><circle cx="179.6" cy="529.8" r="2.100"/><circle cx="194.4" cy="529.8" r="2.100"/><circle cx="194.4" cy="548.6" r="2.100"/><circle cx="238.8" cy="548.6" r="2.100"/><circle cx="272.4" cy="560.9" r="2.100"/><circle cx="283.6" cy="581.9" r="2.100"/></g>
</g>
<rect x="86" y="417" width="219" height="184.500" fill="none" stroke="#111" stroke-width="2"/>
<rect x="86.5" y="160.5" width="10" height="10" fill="#fff" stroke="#2f86d6" stroke-width="1"/>
<rect x="397.5" y="160.5" width="10" height="10" fill="#fff" stroke="#2f86d6" stroke-width="1"/>
<rect x="709.5" y="160.5" width="10" height="10" fill="#fff" stroke="#2f86d6" stroke-width="1"/>
<rect x="86.5" y="379.5" width="10" height="10" fill="#fff" stroke="#2f86d6" stroke-width="1"/>
<rect x="709.5" y="379.5" width="10" height="10" fill="#fff" stroke="#2f86d6" stroke-width="1"/>
<rect x="86.5" y="598.5" width="10" height="10" fill="#fff" stroke="#2f86d6" stroke-width="1"/>
<rect x="397.5" y="598.5" width="10" height="10" fill="#fff" stroke="#2f86d6" stroke-width="1"/>
<rect x="709.5" y="598.5" width="10" height="10" fill="#fff" stroke="#2f86d6" stroke-width="1"/><rect x="86.500" y="160.500" width="633" height="447.500" fill="none" stroke="#3f9fe0" stroke-width="1"/><rect x="86.500" y="160.500" width="633" height="447.500" fill="none" stroke="#6a0030" stroke-width="1" stroke-dasharray="3 1.500"/>
</svg>
<div class="abs " style="left:754px;top:100px;width:396px;height:555px;background:#323232"></div>
<div class="abs " style="left:760px;top:347px;width:1px;height:308px;background:#2a2a2a"></div>
<div class="abs " style="left:760px;top:127px;width:390px;height:1px;background:#262626"></div>
<div class="abs tab" style="left:819px;top:104px;width:102px;height:24px;line-height:23px">Undo History</div>
<div class="abs tab sel" style="left:761px;top:102px;width:57px;height:26px;line-height:25px">Items</div>
<div class="abs docktitle" style="left:764px;top:132px">Items</div>
<svg class="abs" style="left:1122px;top:133px" width="28" height="12" viewBox="0 0 28 12"><g fill="none" stroke="#b8b8b8" stroke-width="0.9"><rect x="1.500" y="0.500" width="10.500" height="10.500" rx="1.500"/><rect x="5" y="2.500" width="5" height="4.500"/><rect x="3.500" y="4.500" width="5" height="4.500" fill="#323232"/><rect x="15.500" y="0.500" width="10.500" height="10.500" rx="1.500"/><path d="M16.500 1.500l8.500 8.500M25 1.500l-8.500 8.500"/></g></svg>
<div class="abs " style="left:761px;top:148px;width:388px;height:125px;background:#1e1e1e"></div>
<div class="abs " style="left:761px;top:148px;width:388px;height:20px;background:#3f3f3f;border-top:1px solid #555"></div>
<div class="abs " style="left:787px;top:149px;width:1px;height:19px;background:#2a2a2a"></div>
<div class="abs " style="left:788px;top:149px;width:1px;height:19px;background:#4a4a4a"></div>
<div class="abs " style="left:813px;top:149px;width:1px;height:19px;background:#2a2a2a"></div>
<div class="abs " style="left:814px;top:149px;width:1px;height:19px;background:#4a4a4a"></div>
<div class="abs " style="left:818px;top:151px;font-size:13.2px;color:#f0f0f0">Item</div>
<svg class="abs" style="left:763px;top:151px" width="48" height="16" viewBox="0 0 48 16"><path d="M1 8c3-5 11-5 15 0-4 5-12 5-15 0z" fill="#e0e0e0" stroke="#bbb" stroke-width="0.8"/><circle cx="8.500" cy="7.500" r="3.300" fill="#555"/><circle cx="8.500" cy="7.500" r="1.500" fill="#222"/><circle cx="7.500" cy="6.500" r="0.900" fill="#eee"/><path d="M31 8V5.500a3.600 3.600 0 0 1 7.200 0V8" fill="none" stroke="#8a8a8a" stroke-width="1.800"/><rect x="28.500" y="7" width="12" height="9" rx="1.500" fill="#6a6a6a"/></svg>
<div class="abs " style="left:761px;top:186px;width:388px;height:19px;background:#474747"></div>
<div class="abs chk" style="left:764px;top:171px"></div>
<div class="abs chk" style="left:791px;top:171px"></div>
<svg class="abs" style="left:764px;top:171px" width="13" height="13" viewBox="0 0 13 13"><path d="M3 7l2.500 3.500L10 2.500" fill="none" stroke="#f4f4f4" stroke-width="1.500"/></svg>
<div class="abs chk" style="left:764px;top:190px"></div>
<div class="abs chk" style="left:791px;top:190px"></div>
<svg class="abs" style="left:764px;top:190px" width="13" height="13" viewBox="0 0 13 13"><path d="M3 7l2.500 3.500L10 2.500" fill="none" stroke="#f4f4f4" stroke-width="1.500"/></svg>
<svg class="abs" style="left:818px;top:171px" width="16" height="13" viewBox="0 0 16 13"><defs><linearGradient id="mg" x1="0" x2="1"><stop offset="0" stop-color="#fafafa"/><stop offset="1" stop-color="#b8b8b8"/></linearGradient></defs><path d="M1 0.500h14v12H2.500z" fill="url(#mg)"/><path d="M1.500 0.500v11.500" stroke="#9a9a9a" stroke-width="1.300"/></svg>
<svg class="abs" style="left:818px;top:190px" width="16" height="13" viewBox="0 0 16 13"><path d="M1 0.500h14v12H2.500z" fill="#a9b6c9"/><path d="M1.500 0.500v11.500" stroke="#7d8aa0" stroke-width="1.300"/></svg>
<div class="abs " style="left:840px;top:170px;font-size:13px;color:#f2f2f2">Map 2</div>
<div class="abs bold" style="left:840px;top:189px;font-size:13px">Map 1</div>
<div class="abs " style="left:823px;top:208px;width:56px;height:5px;background:#fe0000"></div>
<svg class="abs" style="left:948px;top:275px" width="20" height="4"><g fill="#777"><rect x="0" y="1" width="1.500" height="1.500"/><rect x="3" y="1" width="1.500" height="1.500"/><rect x="6" y="1" width="1.500" height="1.500"/><rect x="9" y="1" width="1.500" height="1.500"/><rect x="12" y="1" width="1.500" height="1.500"/><rect x="15" y="1" width="1.500" height="1.500"/></g></svg>
<div class="abs " style="left:760px;top:306px;width:390px;height:1px;background:#262626"></div>
<div class="abs tab" style="left:761px;top:283px;width:64px;height:24px;line-height:23px">Layout</div>
<div class="abs tab" style="left:942px;top:283px;width:64px;height:24px;line-height:23px">Guides</div>
<div class="abs tab sel" style="left:826px;top:281px;width:115px;height:26px;line-height:25px">Item Properties</div>
<div class="abs docktitle" style="left:764px;top:311px">Item Properties</div>
<svg class="abs" style="left:1122px;top:312px" width="28" height="12" viewBox="0 0 28 12"><g fill="none" stroke="#b8b8b8" stroke-width="0.9"><rect x="1.500" y="0.500" width="10.500" height="10.500" rx="1.500"/><rect x="5" y="2.500" width="5" height="4.500"/><rect x="3.500" y="4.500" width="5" height="4.500" fill="#323232"/><rect x="15.500" y="0.500" width="10.500" height="10.500" rx="1.500"/><path d="M16.500 1.500l8.500 8.500M25 1.500l-8.500 8.500"/></g></svg>
<div class="abs " style="left:760px;top:327px;width:390px;height:20px;background:#c8c8c8"></div>
<div class="abs bold" style="left:766px;top:330px;font-size:13px">Map 1</div>
<svg class="abs" style="left:775px;top:356px" width="12" height="10" viewBox="0 0 12 10"><path d="M1 1.500h9.500L5.750 8.500z" fill="#222" stroke="#888" stroke-width="0.9"/></svg>
<div class="abs bold" style="left:794px;top:355px;font-size:13.2px">Overviews</div>
<div class="abs gbox" style="left:773px;top:373px;width:351px;height:300px"></div>
<div class="abs btn" style="left:787px;top:387px;width:76px;height:22px"></div>
<div class="abs btn" style="left:870px;top:387px;width:74px;height:22px"></div>
<div class="abs btn" style="left:952px;top:387px;width:75px;height:22px"></div>
<div class="abs btn" style="left:1035px;top:387px;width:74px;height:22px"></div>
<svg class="abs" style="left:817px;top:391px" width="14" height="14" viewBox="0 0 14 14"><path d="M5.600 1h2.800v4.600h4.600v2.800H8.400v4.600H5.600V8.400H1V5.600h4.600z" fill="#f4f4f4" stroke="#3c8d4f" stroke-width="1.100"/></svg>
<svg class="abs" style="left:899px;top:394px" width="16" height="8" viewBox="0 0 16 8"><rect x="1" y="1" width="13.500" height="5.500" fill="#f4f4f4" stroke="#e23b3b" stroke-width="1.400"/></svg>
<svg class="abs" style="left:982px;top:391px" width="14" height="13" viewBox="0 0 14 13"><path d="M7 1.500L13 11.500H1z" fill="#6a9ad6" stroke="#8fb4e4" stroke-width="0.6"/></svg>
<svg class="abs" style="left:1064px;top:392px" width="14" height="13" viewBox="0 0 14 13"><path d="M7 11.500L13 1.500H1z" fill="#6a9ad6" stroke="#8fb4e4" stroke-width="0.6"/></svg>
<div class="abs " style="left:787px;top:416px;width:323px;height:89px;background:#1e1e1e"></div>
<div class="abs " style="left:787px;top:417px;width:323px;height:16px;background:#474747"></div>
<div class="abs " style="left:790px;top:418px;font-size:13px;color:#f4f4f4">Overview 1</div>
<svg class="abs" style="left:789px;top:516px" width="12" height="10" viewBox="0 0 12 10"><path d="M1 1.500h9.500L5.750 8.500z" fill="#222" stroke="#888" stroke-width="0.900"/></svg>
<div class="abs chk" style="left:806px;top:514px"></div>
<svg class="abs" style="left:806px;top:514px" width="13" height="13" viewBox="0 0 13 13"><path d="M3 7l2.500 3.500L10 2.500" fill="none" stroke="#f4f4f4" stroke-width="1.500"/></svg>
<div class="abs bold" style="left:828px;top:513px;font-size:13.2px">Draw "Overview 1" overview</div>
<div class="abs gbox" style="left:787px;top:532px;width:323px;height:140px"></div>
<div class="abs lbl" style="left:800px;top:550px">Map frame</div>
<div class="abs " style="left:802px;top:569px;width:63px;height:5px;background:#fe0000"></div>
<div class="abs lbl" style="left:800px;top:579px">Frame style</div>
<div class="abs lbl" style="left:800px;top:608px">Blending mode</div>
<div class="abs combo" style="left:897px;top:546px;width:198px;height:22px"></div>
<svg class="abs" style="left:903px;top:550px" width="16" height="13" viewBox="0 0 16 13"><path d="M1 0.500h14v12H2.500z" fill="url(#mg)"/><path d="M1.500 0.500v11.500" stroke="#9a9a9a" stroke-width="1.300"/></svg>
<div class="abs " style="left:922px;top:549px;font-size:13.2px;color:#000">Map 2</div>
<div class="abs " style="left:1080px;top:555px;width:0;height:0;border-left:4px solid transparent;border-right:4px solid transparent;border-top:5px solid #1a1a1a"></div>
<div class="abs combo" style="left:897px;top:576px;width:186px;height:20px"></div>
<div class="abs " style="left:901px;top:581px;width:179px;height:10px;background:#7a2e2f"></div>
<div class="abs combo" style="left:1085px;top:576px;width:10px;height:20px"></div>
<div class="abs " style="left:1086.500px;top:584px;width:0;height:0;border-left:3.500px solid transparent;border-right:3.500px solid transparent;border-top:4.500px solid #e8e8e8"></div>
<div class="abs combo" style="left:897px;top:604px;width:198px;height:22px"></div>
<div class="abs " style="left:901px;top:607px;font-size:13.2px;color:#000">Normal</div>
<div class="abs " style="left:1080px;top:613px;width:0;height:0;border-left:4px solid transparent;border-right:4px solid transparent;border-top:5px solid #1a1a1a"></div>
<div class="abs chk" style="left:801px;top:638px;background:#222;border:none"></div>
<div class="abs lbl" style="left:819px;top:636px">Invert overview</div>
<div class="abs " style="left:1136px;top:347px;width:13px;height:308px;background:#343434;border-left:1px solid #272727"></div>
<div class="abs " style="left:1137px;top:348px;width:12px;height:13px;background:#383838;border:1px solid #4a4a4a"></div>
<div class="abs " style="left:1139.500px;top:352px;width:0;height:0;border-left:3.500px solid transparent;border-right:3.500px solid transparent;border-bottom:4px solid #e0e0e0"></div>
<div class="abs " style="left:1137px;top:642px;width:12px;height:13px;background:#383838;border:1px solid #4a4a4a"></div>
<div class="abs " style="left:1139.500px;top:646px;width:0;height:0;border-left:3.500px solid transparent;border-right:3.500px solid transparent;border-top:4px solid #e0e0e0"></div>
<div class="abs " style="left:1137px;top:473px;width:12px;height:53px;background:linear-gradient(90deg,#3a3a3a,#444);border:1px solid #4c4c4c"></div>
<svg class="abs" style="left:768px;top:350px" width="112" height="114" viewBox="768 350 112 114"><ellipse cx="823.600" cy="407.600" rx="48" ry="48.500" fill="none" stroke="#fe0000" stroke-width="5.600"/></svg>
<svg class="abs" style="left:756px;top:372px" width="4" height="18"><g fill="#777"><rect x="1" y="0" width="1.500" height="1.500"/><rect x="1" y="3" width="1.500" height="1.500"/><rect x="1" y="6" width="1.500" height="1.500"/><rect x="1" y="9" width="1.500" height="1.500"/><rect x="1" y="12" width="1.500" height="1.500"/><rect x="1" y="15" width="1.500" height="1.500"/></g></svg>
<div class="abs " style="left:0;top:655px;width:1150px;height:30px;background:#323232"></div>
<div class="abs " style="left:754px;top:655px;width:395px;height:1px;background:#2a2a2a"></div>
<div class="abs " style="left:4px;top:663px;font-size:13.2px;color:#f0f0f0">1 item selected</div>
<div class="abs lbl" style="left:575px;top:663.5px;color:#f0f0f0;font-size:13.6px">x: 308.889 mm</div>
<div class="abs lbl" style="left:681px;top:663.5px;color:#f0f0f0;font-size:13.4px">y: 15.9245 mm</div>
<div class="abs lbl" style="left:787px;top:664px;color:#f0f0f0">page: 1</div>
<div class="abs " style="left:894px;top:660px;width:125px;height:22px;background:#1e1e1e;border:1px solid #444;border-radius:3px"></div>
<div class="abs " style="left:1000px;top:660px;width:19px;height:22px;background:#3c3c3c;border:1px solid #555;border-radius:0 3px 3px 0"></div>
<div class="abs " style="left:1005px;top:669px;width:0;height:0;border-left:4px solid transparent;border-right:4px solid transparent;border-top:5px solid #1a1a1a"></div>
<div class="abs " style="left:897px;top:663px;font-size:13.2px;color:#f4f4f4">75.3%</div>
<div class="abs " style="left:1028px;top:668px;width:97px;height:5px;background:#3a3a3a;border:1px solid #262626;border-radius:2px"></div>
<div class="abs " style="left:1028px;top:668.500px;width:6px;height:4px;background:#4a9cf0"></div>
<div class="abs " style="left:1034px;top:665px;width:11px;height:11px;background:#484848;border:1px solid #5c5c5c;border-radius:2px"></div>
<svg class="abs" style="left:1136px;top:671px" width="13" height="13"><g fill="#8a8a8a"><rect x="10" y="1" width="2" height="2"/><rect x="7" y="4" width="2" height="2"/><rect x="10" y="4" width="2" height="2"/><rect x="4" y="7" width="2" height="2"/><rect x="7" y="7" width="2" height="2"/><rect x="10" y="7" width="2" height="2"/><rect x="1" y="10" width="2" height="2"/><rect x="4" y="10" width="2" height="2"/><rect x="7" y="10" width="2" height="2"/><rect x="10" y="10" width="2" height="2"/></g></svg>
<div class="abs " style="left:0;top:684px;width:1150px;height:1px;background:#575757"></div>
<div class="abs " style="left:1149px;top:0;width:1px;height:685px;background:#2b2b2b"></div>
<div class="abs " style="left:1150px;top:0;width:1px;height:685px;background:#0c0c0c"></div>
<div class="abs " style="left:1151px;top:0;width:1px;height:685px;background:linear-gradient(#2f4a4a,#4a6866 30%,#6f807a 70%,#8a948c)"></div>
</body></html>
